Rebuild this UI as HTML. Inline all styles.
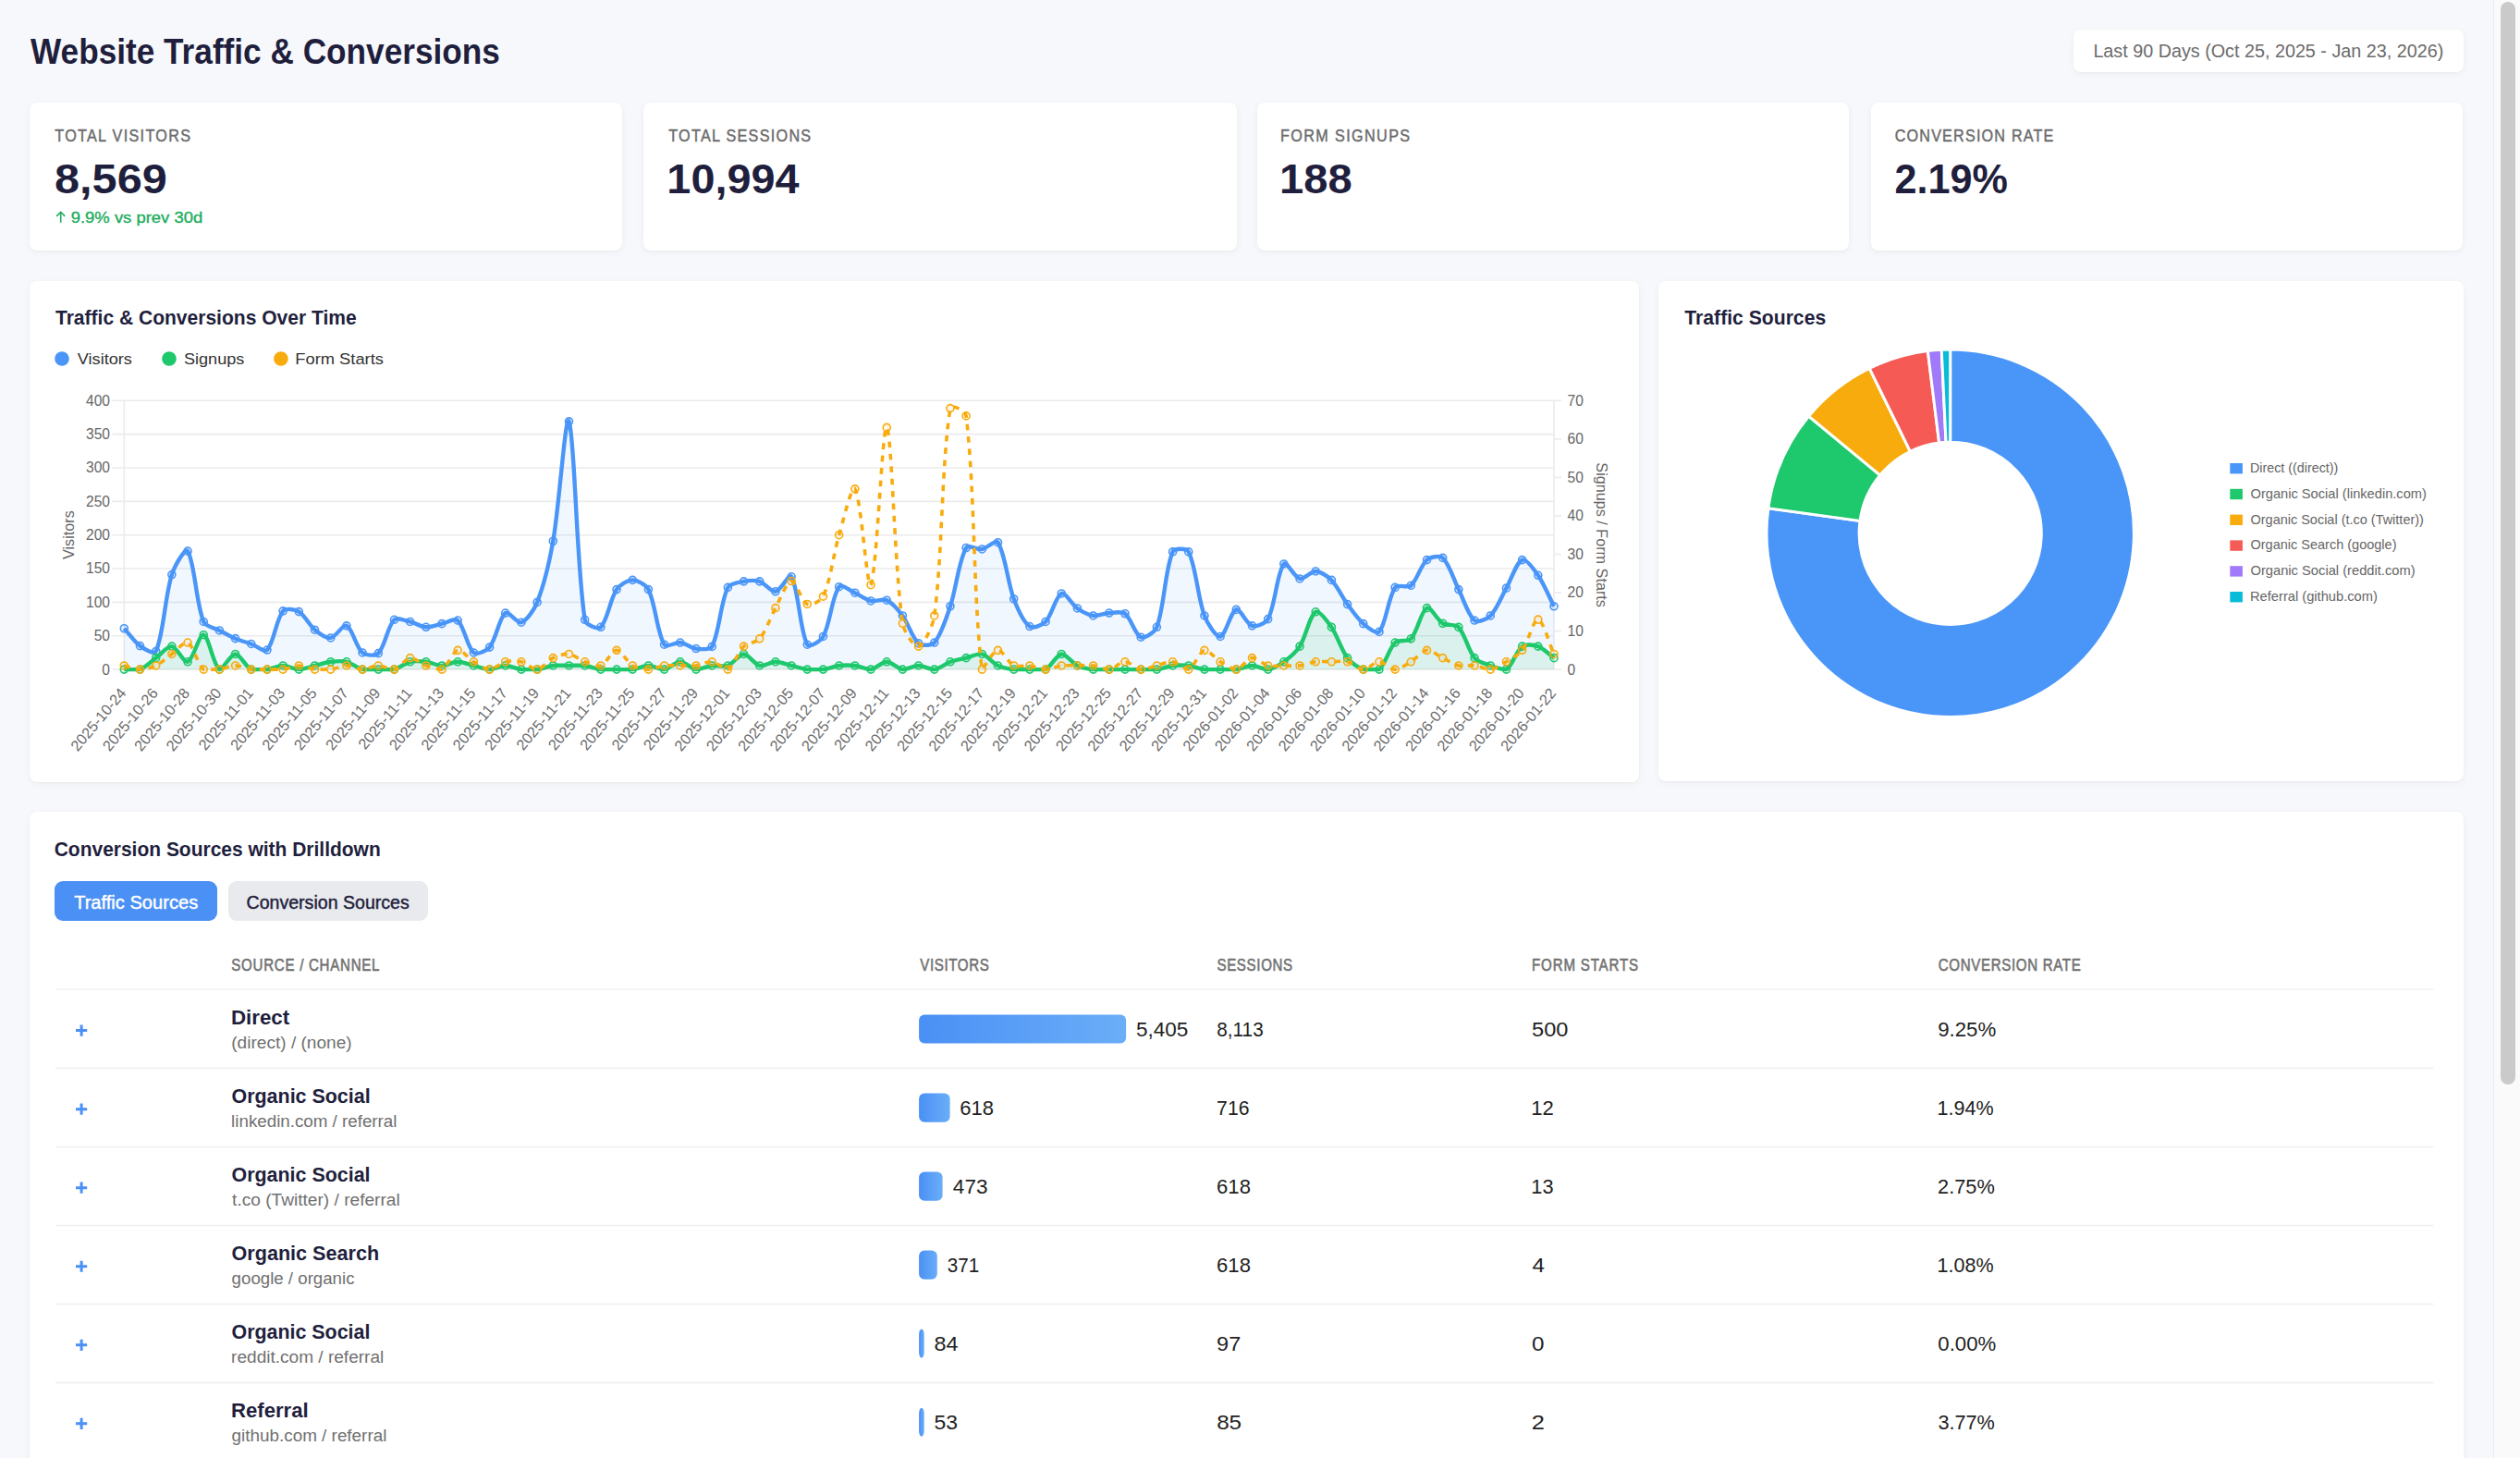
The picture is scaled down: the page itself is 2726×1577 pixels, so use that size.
<!DOCTYPE html>
<html><head><meta charset="utf-8"><title>Website Traffic &amp; Conversions</title>
<style>
html,body{margin:0;padding:0;}
body{width:2726px;height:1577px;overflow:hidden;background:#f7f8fb;position:relative;font-family:"Liberation Sans",sans-serif;}
.card{position:absolute;background:#fff;border-radius:8px;box-shadow:0 2px 8px rgba(0,0,0,0.045),0 1px 2px rgba(0,0,0,0.03);}
.btn{position:absolute;border-radius:9px;}
.sb{position:absolute;left:2697px;top:0;width:29px;height:1577px;background:#fafafa;border-left:1px solid #ececec;box-sizing:border-box;}
.thumb{position:absolute;left:2705px;top:2px;width:16px;height:1170.5px;background:#cacaca;border-radius:8px;}
</style>
<script>(function(){var w=window.innerWidth;if(w&&Math.abs(w-2726)>3){document.documentElement.style.zoom=(w/2726);}})();</script></head>
<body>
<div class="card" style="left:2243px;top:32px;width:421.5px;height:45.5px;border-radius:8px"></div>
<div class="card" style="left:32px;top:111px;width:640.6px;height:160px;border-radius:8px"></div>
<div class="card" style="left:695.8px;top:111px;width:641.8px;height:160px;border-radius:8px"></div>
<div class="card" style="left:1359.6px;top:111px;width:640.8px;height:160px;border-radius:8px"></div>
<div class="card" style="left:2023.6px;top:111px;width:640.8px;height:160px;border-radius:8px"></div>
<div class="card" style="left:32px;top:303.7px;width:1740.5px;height:542.3px;border-radius:8px"></div>
<div class="card" style="left:1794.4px;top:303.7px;width:870.6px;height:541.6px;border-radius:8px"></div>
<div class="card" style="left:32px;top:878.3px;width:2632.6px;height:800px;border-radius:8px"></div>
<div class="btn" style="left:59.2px;top:952.5px;width:175.5px;height:43.9px;background:#4a90f5"></div>
<div class="btn" style="left:246.7px;top:952.5px;width:216.8px;height:43.9px;background:#e9eaee"></div>
<div class="sb"></div><div class="thumb"></div>
<svg width="2726" height="1577" viewBox="0 0 2726 1577" style="position:absolute;left:0;top:0" font-family="Liberation Sans, sans-serif">
<defs><linearGradient id="barg" x1="0" x2="1" y1="0" y2="0"><stop offset="0" stop-color="#4a90f5"/><stop offset="1" stop-color="#6aaef8"/></linearGradient></defs>
<line x1="121.5" y1="724.10" x2="1681.00" y2="724.10" stroke="#ebebeb" stroke-width="1.6"/>
<text x="119" y="729.50" font-size="15.6" fill="#666" text-anchor="end">0</text>
<line x1="121.5" y1="687.75" x2="1681.00" y2="687.75" stroke="#ebebeb" stroke-width="1.6"/>
<text x="119" y="693.15" font-size="15.6" fill="#666" text-anchor="end">50</text>
<line x1="121.5" y1="651.40" x2="1681.00" y2="651.40" stroke="#ebebeb" stroke-width="1.6"/>
<text x="119" y="656.80" font-size="15.6" fill="#666" text-anchor="end">100</text>
<line x1="121.5" y1="615.05" x2="1681.00" y2="615.05" stroke="#ebebeb" stroke-width="1.6"/>
<text x="119" y="620.45" font-size="15.6" fill="#666" text-anchor="end">150</text>
<line x1="121.5" y1="578.70" x2="1681.00" y2="578.70" stroke="#ebebeb" stroke-width="1.6"/>
<text x="119" y="584.10" font-size="15.6" fill="#666" text-anchor="end">200</text>
<line x1="121.5" y1="542.35" x2="1681.00" y2="542.35" stroke="#ebebeb" stroke-width="1.6"/>
<text x="119" y="547.75" font-size="15.6" fill="#666" text-anchor="end">250</text>
<line x1="121.5" y1="506.00" x2="1681.00" y2="506.00" stroke="#ebebeb" stroke-width="1.6"/>
<text x="119" y="511.40" font-size="15.6" fill="#666" text-anchor="end">300</text>
<line x1="121.5" y1="469.65" x2="1681.00" y2="469.65" stroke="#ebebeb" stroke-width="1.6"/>
<text x="119" y="475.05" font-size="15.6" fill="#666" text-anchor="end">350</text>
<line x1="121.5" y1="433.30" x2="1681.00" y2="433.30" stroke="#ebebeb" stroke-width="1.6"/>
<text x="119" y="438.70" font-size="15.6" fill="#666" text-anchor="end">400</text>
<line x1="1681.00" y1="724.10" x2="1689" y2="724.10" stroke="#ebebeb" stroke-width="1.6"/>
<text x="1695.6" y="729.50" font-size="15.6" fill="#666">0</text>
<line x1="1681.00" y1="682.56" x2="1689" y2="682.56" stroke="#ebebeb" stroke-width="1.6"/>
<text x="1695.6" y="687.96" font-size="15.6" fill="#666">10</text>
<line x1="1681.00" y1="641.01" x2="1689" y2="641.01" stroke="#ebebeb" stroke-width="1.6"/>
<text x="1695.6" y="646.41" font-size="15.6" fill="#666">20</text>
<line x1="1681.00" y1="599.47" x2="1689" y2="599.47" stroke="#ebebeb" stroke-width="1.6"/>
<text x="1695.6" y="604.87" font-size="15.6" fill="#666">30</text>
<line x1="1681.00" y1="557.93" x2="1689" y2="557.93" stroke="#ebebeb" stroke-width="1.6"/>
<text x="1695.6" y="563.33" font-size="15.6" fill="#666">40</text>
<line x1="1681.00" y1="516.39" x2="1689" y2="516.39" stroke="#ebebeb" stroke-width="1.6"/>
<text x="1695.6" y="521.79" font-size="15.6" fill="#666">50</text>
<line x1="1681.00" y1="474.84" x2="1689" y2="474.84" stroke="#ebebeb" stroke-width="1.6"/>
<text x="1695.6" y="480.24" font-size="15.6" fill="#666">60</text>
<line x1="1681.00" y1="433.30" x2="1689" y2="433.30" stroke="#ebebeb" stroke-width="1.6"/>
<text x="1695.6" y="438.70" font-size="15.6" fill="#666">70</text>
<line x1="134.3" y1="433.3" x2="134.3" y2="724.1" stroke="#ebebeb" stroke-width="1.6"/>
<line x1="1681.0" y1="433.3" x2="1681.0" y2="724.1" stroke="#ebebeb" stroke-width="1.6"/>
<path d="M134.30,679.75 C139.46,685.42 145.46,694.32 151.49,698.65 C155.77,701.73 166.85,708.55 168.67,704.47 C177.16,685.43 178.29,645.44 185.86,621.59 C188.60,612.94 200.14,591.85 203.04,596.15 C210.45,607.11 211.98,651.91 220.23,672.48 C222.29,677.64 232.21,679.18 237.41,681.93 C242.52,684.64 249.29,688.41 254.60,690.66 C259.60,692.77 266.66,694.63 271.78,696.47 C276.97,698.34 286.00,706.09 288.97,703.02 C296.32,695.40 298.67,669.87 306.16,660.85 C308.98,657.44 319.24,659.15 323.34,661.58 C329.56,665.26 334.60,676.32 340.53,681.21 C344.91,684.82 352.85,690.55 357.71,689.93 C363.16,689.24 370.88,674.97 374.90,676.85 C381.19,679.77 385.25,700.00 392.08,705.93 C395.56,708.94 406.18,709.85 409.27,706.65 C416.49,699.17 419.25,677.47 426.45,670.30 C429.56,667.22 438.60,671.31 443.64,672.48 C448.91,673.71 455.59,677.97 460.83,678.30 C465.90,678.62 472.86,675.75 478.01,674.66 C483.17,673.57 491.99,668.11 495.20,671.03 C502.30,677.49 505.35,699.98 512.38,705.93 C515.66,708.70 526.40,704.07 529.57,700.11 C536.71,691.20 539.83,668.45 546.75,663.03 C550.14,660.38 559.62,674.67 563.94,673.21 C569.94,671.18 578.15,659.02 581.12,651.40 C588.46,632.63 594.77,605.41 598.31,585.24 C605.08,546.74 611.60,446.20 615.50,455.84 C621.91,471.72 623.20,608.97 632.68,670.30 C633.52,675.71 646.77,681.25 649.87,678.30 C657.08,671.43 659.95,648.10 667.05,637.59 C670.26,632.83 679.08,627.41 684.24,627.41 C689.39,627.41 698.91,632.49 701.42,637.59 C709.22,653.43 710.55,683.73 718.61,697.20 C720.86,700.96 730.79,694.39 735.79,695.02 C741.10,695.69 747.67,700.89 752.98,701.56 C757.98,702.20 768.03,703.50 770.17,699.38 C778.34,683.65 779.28,651.97 787.35,635.41 C789.59,630.81 799.21,629.88 804.54,628.86 C809.52,627.91 817.00,627.37 821.72,628.86 C827.31,630.64 834.12,640.48 838.91,639.77 C844.43,638.95 853.65,619.68 856.09,623.77 C863.96,636.91 865.07,681.74 873.28,697.20 C875.38,701.15 887.84,693.25 890.46,688.48 C898.15,674.49 899.87,645.37 907.65,634.68 C910.18,631.20 919.80,638.99 924.84,641.22 C930.11,643.57 936.57,648.68 942.02,649.95 C946.88,651.08 954.90,647.21 959.21,649.22 C965.21,652.01 972.16,660.21 976.39,665.94 C982.47,674.17 986.70,689.93 993.58,695.75 C997.01,698.65 1007.81,698.46 1010.76,695.02 C1018.12,686.46 1023.87,667.92 1027.95,655.76 C1034.18,637.17 1036.97,607.19 1045.13,592.51 C1047.28,588.65 1057.37,594.81 1062.32,593.97 C1067.68,593.06 1077.16,583.03 1079.51,586.70 C1087.47,599.17 1090.01,630.09 1096.69,647.76 C1100.32,657.35 1107.10,672.70 1113.88,677.57 C1117.41,680.11 1127.57,676.10 1131.06,672.48 C1137.88,665.41 1142.07,644.56 1148.25,641.95 C1152.38,640.20 1159.73,653.96 1165.43,657.94 C1170.04,661.16 1177.25,665.14 1182.62,665.94 C1187.56,666.67 1194.61,663.36 1199.80,663.03 C1204.93,662.71 1213.29,660.94 1216.99,663.76 C1223.60,668.79 1227.97,686.58 1234.18,689.20 C1238.29,690.94 1249.33,683.74 1251.36,678.30 C1259.65,656.04 1260.00,617.12 1268.55,596.88 C1270.31,592.69 1283.73,592.85 1285.73,596.88 C1294.04,613.56 1295.54,646.29 1302.92,665.94 C1305.85,673.77 1315.40,689.37 1320.10,688.48 C1325.71,687.41 1331.31,661.42 1337.29,659.40 C1341.62,657.93 1348.62,675.11 1354.47,676.85 C1358.93,678.17 1369.28,674.21 1371.66,669.58 C1379.59,654.15 1381.36,619.45 1388.85,609.96 C1391.68,606.37 1400.33,624.63 1406.03,625.96 C1410.64,627.03 1418.15,617.74 1423.22,617.96 C1428.46,618.18 1436.43,623.29 1440.40,627.41 C1446.74,633.98 1452.07,645.99 1457.59,653.58 C1462.38,660.17 1468.74,669.43 1474.77,674.66 C1479.05,678.37 1489.13,686.62 1491.96,683.39 C1499.44,674.84 1501.45,646.64 1509.14,635.41 C1511.76,631.59 1522.75,636.33 1526.33,633.23 C1533.06,627.39 1536.79,611.43 1543.52,605.60 C1547.10,602.49 1557.49,600.43 1560.70,603.42 C1567.80,610.02 1572.69,627.36 1577.89,637.59 C1583.00,647.64 1588.09,665.27 1595.07,671.03 C1598.40,673.77 1608.73,669.53 1612.26,665.94 C1619.04,659.06 1624.33,645.10 1629.44,636.13 C1634.65,627.00 1640.51,608.06 1646.63,605.60 C1650.82,603.92 1659.80,616.46 1663.81,622.32 C1670.11,631.51 1675.84,645.73 1681.00,655.76 L1681.0,724.1 L134.3,724.1 Z" fill="rgba(74,150,248,0.08)"/>
<path d="M134.30,724.10 C139.46,724.10 146.87,724.10 151.49,724.10 C157.18,722.03 163.52,715.38 168.67,711.64 C173.83,707.90 181.01,698.59 185.86,699.17 C191.32,699.83 198.77,717.34 203.04,715.79 C209.08,713.60 215.58,685.59 220.23,686.71 C225.89,688.08 230.89,720.16 237.41,724.10 C241.20,724.10 249.44,707.48 254.60,707.48 C259.75,707.48 265.79,721.20 271.78,724.10 C276.10,724.10 283.89,724.10 288.97,724.10 C294.20,723.47 301.00,719.95 306.16,719.95 C311.31,719.95 318.19,724.10 323.34,724.10 C328.50,724.10 335.37,721.19 340.53,719.95 C345.68,718.70 352.48,716.42 357.71,715.79 C362.79,715.18 370.01,714.61 374.90,715.79 C380.32,717.10 386.66,722.79 392.08,724.10 C396.97,724.10 404.11,724.10 409.27,724.10 C414.42,724.10 421.57,724.10 426.45,724.10 C431.88,722.79 438.21,717.10 443.64,715.79 C448.53,714.61 455.74,715.18 460.83,715.79 C466.05,716.42 472.86,719.95 478.01,719.95 C483.17,719.95 490.04,715.79 495.20,715.79 C500.35,715.79 507.23,718.70 512.38,719.95 C517.54,721.19 524.41,724.10 529.57,724.10 C534.72,724.10 541.60,719.95 546.75,719.95 C551.91,719.95 558.71,723.47 563.94,724.10 C569.02,724.10 576.04,724.10 581.12,724.10 C586.35,723.47 593.08,720.58 598.31,719.95 C603.39,719.33 610.34,719.95 615.50,719.95 C620.65,719.95 627.60,719.33 632.68,719.95 C637.91,720.58 644.64,723.47 649.87,724.10 C654.95,724.10 661.90,724.10 667.05,724.10 C672.21,724.10 679.16,724.10 684.24,724.10 C689.47,723.47 696.27,719.95 701.42,719.95 C706.58,719.95 713.65,724.10 718.61,724.10 C723.96,723.45 730.64,715.79 735.79,715.79 C740.95,715.79 747.63,723.45 752.98,724.10 C757.94,724.10 764.94,720.58 770.17,719.95 C775.25,719.33 782.74,721.62 787.35,719.95 C793.05,717.88 799.38,707.48 804.54,707.48 C809.69,707.48 816.10,718.59 821.72,719.95 C826.41,721.08 833.75,715.79 838.91,715.79 C844.06,715.79 850.94,718.70 856.09,719.95 C861.25,721.19 868.05,723.47 873.28,724.10 C878.36,724.10 885.38,724.10 890.46,724.10 C895.69,723.47 902.42,720.58 907.65,719.95 C912.73,719.33 919.75,719.33 924.84,719.95 C930.06,720.58 937.06,724.10 942.02,724.10 C947.37,723.45 954.05,715.79 959.21,715.79 C964.36,715.79 971.04,723.45 976.39,724.10 C981.35,724.10 988.42,719.95 993.58,719.95 C998.73,719.95 1005.81,724.10 1010.76,724.10 C1016.12,723.45 1022.60,717.73 1027.95,715.79 C1032.91,713.99 1039.98,712.88 1045.13,711.64 C1050.29,710.39 1057.63,706.35 1062.32,707.48 C1067.95,708.84 1073.88,717.23 1079.51,719.95 C1084.19,722.21 1091.46,723.47 1096.69,724.10 C1101.77,724.10 1108.72,724.10 1113.88,724.10 C1119.03,724.10 1126.75,724.10 1131.06,724.10 C1137.06,721.20 1142.79,708.14 1148.25,707.48 C1153.10,706.90 1159.81,717.23 1165.43,719.95 C1170.12,722.21 1177.39,723.47 1182.62,724.10 C1187.70,724.10 1194.65,724.10 1199.80,724.10 C1204.96,724.10 1211.83,724.10 1216.99,724.10 C1222.15,724.10 1229.02,724.10 1234.18,724.10 C1239.33,724.10 1246.28,724.10 1251.36,724.10 C1256.59,723.47 1263.32,720.58 1268.55,719.95 C1273.63,719.33 1280.65,719.33 1285.73,719.95 C1290.96,720.58 1297.69,723.47 1302.92,724.10 C1308.00,724.10 1314.95,724.10 1320.10,724.10 C1325.26,724.10 1332.21,724.10 1337.29,724.10 C1342.52,723.47 1349.32,719.95 1354.47,719.95 C1359.63,719.95 1366.70,724.10 1371.66,724.10 C1377.01,723.45 1384.27,719.11 1388.85,715.79 C1394.58,711.63 1402.24,705.13 1406.03,699.17 C1412.55,688.93 1416.69,665.73 1423.22,661.79 C1427.01,659.50 1436.38,672.57 1440.40,678.40 C1446.69,687.53 1451.01,702.89 1457.59,711.64 C1461.32,716.60 1469.08,722.03 1474.77,724.10 C1479.39,724.10 1488.48,724.10 1491.96,724.10 C1498.79,718.32 1502.38,701.56 1509.14,695.02 C1512.69,691.59 1523.02,694.47 1526.33,690.87 C1533.33,683.25 1537.22,660.67 1543.52,657.63 C1547.54,655.69 1554.77,670.67 1560.70,674.25 C1565.09,676.90 1574.58,674.80 1577.89,678.40 C1584.89,686.02 1588.24,703.38 1595.07,711.64 C1598.56,715.85 1606.90,718.00 1612.26,719.95 C1617.22,721.74 1625.64,724.10 1629.44,724.10 C1635.95,720.17 1640.05,703.94 1646.63,699.17 C1650.36,696.47 1659.20,697.50 1663.81,699.17 C1669.51,701.24 1675.84,707.90 1681.00,711.64 L1681.0,724.1 L134.3,724.1 Z" fill="rgba(34,197,94,0.1)"/>
<path d="M134.30,679.75 C139.46,685.42 145.46,694.32 151.49,698.65 C155.77,701.73 166.85,708.55 168.67,704.47 C177.16,685.43 178.29,645.44 185.86,621.59 C188.60,612.94 200.14,591.85 203.04,596.15 C210.45,607.11 211.98,651.91 220.23,672.48 C222.29,677.64 232.21,679.18 237.41,681.93 C242.52,684.64 249.29,688.41 254.60,690.66 C259.60,692.77 266.66,694.63 271.78,696.47 C276.97,698.34 286.00,706.09 288.97,703.02 C296.32,695.40 298.67,669.87 306.16,660.85 C308.98,657.44 319.24,659.15 323.34,661.58 C329.56,665.26 334.60,676.32 340.53,681.21 C344.91,684.82 352.85,690.55 357.71,689.93 C363.16,689.24 370.88,674.97 374.90,676.85 C381.19,679.77 385.25,700.00 392.08,705.93 C395.56,708.94 406.18,709.85 409.27,706.65 C416.49,699.17 419.25,677.47 426.45,670.30 C429.56,667.22 438.60,671.31 443.64,672.48 C448.91,673.71 455.59,677.97 460.83,678.30 C465.90,678.62 472.86,675.75 478.01,674.66 C483.17,673.57 491.99,668.11 495.20,671.03 C502.30,677.49 505.35,699.98 512.38,705.93 C515.66,708.70 526.40,704.07 529.57,700.11 C536.71,691.20 539.83,668.45 546.75,663.03 C550.14,660.38 559.62,674.67 563.94,673.21 C569.94,671.18 578.15,659.02 581.12,651.40 C588.46,632.63 594.77,605.41 598.31,585.24 C605.08,546.74 611.60,446.20 615.50,455.84 C621.91,471.72 623.20,608.97 632.68,670.30 C633.52,675.71 646.77,681.25 649.87,678.30 C657.08,671.43 659.95,648.10 667.05,637.59 C670.26,632.83 679.08,627.41 684.24,627.41 C689.39,627.41 698.91,632.49 701.42,637.59 C709.22,653.43 710.55,683.73 718.61,697.20 C720.86,700.96 730.79,694.39 735.79,695.02 C741.10,695.69 747.67,700.89 752.98,701.56 C757.98,702.20 768.03,703.50 770.17,699.38 C778.34,683.65 779.28,651.97 787.35,635.41 C789.59,630.81 799.21,629.88 804.54,628.86 C809.52,627.91 817.00,627.37 821.72,628.86 C827.31,630.64 834.12,640.48 838.91,639.77 C844.43,638.95 853.65,619.68 856.09,623.77 C863.96,636.91 865.07,681.74 873.28,697.20 C875.38,701.15 887.84,693.25 890.46,688.48 C898.15,674.49 899.87,645.37 907.65,634.68 C910.18,631.20 919.80,638.99 924.84,641.22 C930.11,643.57 936.57,648.68 942.02,649.95 C946.88,651.08 954.90,647.21 959.21,649.22 C965.21,652.01 972.16,660.21 976.39,665.94 C982.47,674.17 986.70,689.93 993.58,695.75 C997.01,698.65 1007.81,698.46 1010.76,695.02 C1018.12,686.46 1023.87,667.92 1027.95,655.76 C1034.18,637.17 1036.97,607.19 1045.13,592.51 C1047.28,588.65 1057.37,594.81 1062.32,593.97 C1067.68,593.06 1077.16,583.03 1079.51,586.70 C1087.47,599.17 1090.01,630.09 1096.69,647.76 C1100.32,657.35 1107.10,672.70 1113.88,677.57 C1117.41,680.11 1127.57,676.10 1131.06,672.48 C1137.88,665.41 1142.07,644.56 1148.25,641.95 C1152.38,640.20 1159.73,653.96 1165.43,657.94 C1170.04,661.16 1177.25,665.14 1182.62,665.94 C1187.56,666.67 1194.61,663.36 1199.80,663.03 C1204.93,662.71 1213.29,660.94 1216.99,663.76 C1223.60,668.79 1227.97,686.58 1234.18,689.20 C1238.29,690.94 1249.33,683.74 1251.36,678.30 C1259.65,656.04 1260.00,617.12 1268.55,596.88 C1270.31,592.69 1283.73,592.85 1285.73,596.88 C1294.04,613.56 1295.54,646.29 1302.92,665.94 C1305.85,673.77 1315.40,689.37 1320.10,688.48 C1325.71,687.41 1331.31,661.42 1337.29,659.40 C1341.62,657.93 1348.62,675.11 1354.47,676.85 C1358.93,678.17 1369.28,674.21 1371.66,669.58 C1379.59,654.15 1381.36,619.45 1388.85,609.96 C1391.68,606.37 1400.33,624.63 1406.03,625.96 C1410.64,627.03 1418.15,617.74 1423.22,617.96 C1428.46,618.18 1436.43,623.29 1440.40,627.41 C1446.74,633.98 1452.07,645.99 1457.59,653.58 C1462.38,660.17 1468.74,669.43 1474.77,674.66 C1479.05,678.37 1489.13,686.62 1491.96,683.39 C1499.44,674.84 1501.45,646.64 1509.14,635.41 C1511.76,631.59 1522.75,636.33 1526.33,633.23 C1533.06,627.39 1536.79,611.43 1543.52,605.60 C1547.10,602.49 1557.49,600.43 1560.70,603.42 C1567.80,610.02 1572.69,627.36 1577.89,637.59 C1583.00,647.64 1588.09,665.27 1595.07,671.03 C1598.40,673.77 1608.73,669.53 1612.26,665.94 C1619.04,659.06 1624.33,645.10 1629.44,636.13 C1634.65,627.00 1640.51,608.06 1646.63,605.60 C1650.82,603.92 1659.80,616.46 1663.81,622.32 C1670.11,631.51 1675.84,645.73 1681.00,655.76" fill="none" stroke="#4a96f8" stroke-width="4.4" stroke-linejoin="round"/>
<circle cx="134.30" cy="679.75" r="4" fill="rgba(59,130,246,0.1)" stroke="#4a96f8" stroke-width="1.6"/>
<circle cx="151.49" cy="698.65" r="4" fill="rgba(59,130,246,0.1)" stroke="#4a96f8" stroke-width="1.6"/>
<circle cx="168.67" cy="704.47" r="4" fill="rgba(59,130,246,0.1)" stroke="#4a96f8" stroke-width="1.6"/>
<circle cx="185.86" cy="621.59" r="4" fill="rgba(59,130,246,0.1)" stroke="#4a96f8" stroke-width="1.6"/>
<circle cx="203.04" cy="596.15" r="4" fill="rgba(59,130,246,0.1)" stroke="#4a96f8" stroke-width="1.6"/>
<circle cx="220.23" cy="672.48" r="4" fill="rgba(59,130,246,0.1)" stroke="#4a96f8" stroke-width="1.6"/>
<circle cx="237.41" cy="681.93" r="4" fill="rgba(59,130,246,0.1)" stroke="#4a96f8" stroke-width="1.6"/>
<circle cx="254.60" cy="690.66" r="4" fill="rgba(59,130,246,0.1)" stroke="#4a96f8" stroke-width="1.6"/>
<circle cx="271.78" cy="696.47" r="4" fill="rgba(59,130,246,0.1)" stroke="#4a96f8" stroke-width="1.6"/>
<circle cx="288.97" cy="703.02" r="4" fill="rgba(59,130,246,0.1)" stroke="#4a96f8" stroke-width="1.6"/>
<circle cx="306.16" cy="660.85" r="4" fill="rgba(59,130,246,0.1)" stroke="#4a96f8" stroke-width="1.6"/>
<circle cx="323.34" cy="661.58" r="4" fill="rgba(59,130,246,0.1)" stroke="#4a96f8" stroke-width="1.6"/>
<circle cx="340.53" cy="681.21" r="4" fill="rgba(59,130,246,0.1)" stroke="#4a96f8" stroke-width="1.6"/>
<circle cx="357.71" cy="689.93" r="4" fill="rgba(59,130,246,0.1)" stroke="#4a96f8" stroke-width="1.6"/>
<circle cx="374.90" cy="676.85" r="4" fill="rgba(59,130,246,0.1)" stroke="#4a96f8" stroke-width="1.6"/>
<circle cx="392.08" cy="705.93" r="4" fill="rgba(59,130,246,0.1)" stroke="#4a96f8" stroke-width="1.6"/>
<circle cx="409.27" cy="706.65" r="4" fill="rgba(59,130,246,0.1)" stroke="#4a96f8" stroke-width="1.6"/>
<circle cx="426.45" cy="670.30" r="4" fill="rgba(59,130,246,0.1)" stroke="#4a96f8" stroke-width="1.6"/>
<circle cx="443.64" cy="672.48" r="4" fill="rgba(59,130,246,0.1)" stroke="#4a96f8" stroke-width="1.6"/>
<circle cx="460.83" cy="678.30" r="4" fill="rgba(59,130,246,0.1)" stroke="#4a96f8" stroke-width="1.6"/>
<circle cx="478.01" cy="674.66" r="4" fill="rgba(59,130,246,0.1)" stroke="#4a96f8" stroke-width="1.6"/>
<circle cx="495.20" cy="671.03" r="4" fill="rgba(59,130,246,0.1)" stroke="#4a96f8" stroke-width="1.6"/>
<circle cx="512.38" cy="705.93" r="4" fill="rgba(59,130,246,0.1)" stroke="#4a96f8" stroke-width="1.6"/>
<circle cx="529.57" cy="700.11" r="4" fill="rgba(59,130,246,0.1)" stroke="#4a96f8" stroke-width="1.6"/>
<circle cx="546.75" cy="663.03" r="4" fill="rgba(59,130,246,0.1)" stroke="#4a96f8" stroke-width="1.6"/>
<circle cx="563.94" cy="673.21" r="4" fill="rgba(59,130,246,0.1)" stroke="#4a96f8" stroke-width="1.6"/>
<circle cx="581.12" cy="651.40" r="4" fill="rgba(59,130,246,0.1)" stroke="#4a96f8" stroke-width="1.6"/>
<circle cx="598.31" cy="585.24" r="4" fill="rgba(59,130,246,0.1)" stroke="#4a96f8" stroke-width="1.6"/>
<circle cx="615.50" cy="455.84" r="4" fill="rgba(59,130,246,0.1)" stroke="#4a96f8" stroke-width="1.6"/>
<circle cx="632.68" cy="670.30" r="4" fill="rgba(59,130,246,0.1)" stroke="#4a96f8" stroke-width="1.6"/>
<circle cx="649.87" cy="678.30" r="4" fill="rgba(59,130,246,0.1)" stroke="#4a96f8" stroke-width="1.6"/>
<circle cx="667.05" cy="637.59" r="4" fill="rgba(59,130,246,0.1)" stroke="#4a96f8" stroke-width="1.6"/>
<circle cx="684.24" cy="627.41" r="4" fill="rgba(59,130,246,0.1)" stroke="#4a96f8" stroke-width="1.6"/>
<circle cx="701.42" cy="637.59" r="4" fill="rgba(59,130,246,0.1)" stroke="#4a96f8" stroke-width="1.6"/>
<circle cx="718.61" cy="697.20" r="4" fill="rgba(59,130,246,0.1)" stroke="#4a96f8" stroke-width="1.6"/>
<circle cx="735.79" cy="695.02" r="4" fill="rgba(59,130,246,0.1)" stroke="#4a96f8" stroke-width="1.6"/>
<circle cx="752.98" cy="701.56" r="4" fill="rgba(59,130,246,0.1)" stroke="#4a96f8" stroke-width="1.6"/>
<circle cx="770.17" cy="699.38" r="4" fill="rgba(59,130,246,0.1)" stroke="#4a96f8" stroke-width="1.6"/>
<circle cx="787.35" cy="635.41" r="4" fill="rgba(59,130,246,0.1)" stroke="#4a96f8" stroke-width="1.6"/>
<circle cx="804.54" cy="628.86" r="4" fill="rgba(59,130,246,0.1)" stroke="#4a96f8" stroke-width="1.6"/>
<circle cx="821.72" cy="628.86" r="4" fill="rgba(59,130,246,0.1)" stroke="#4a96f8" stroke-width="1.6"/>
<circle cx="838.91" cy="639.77" r="4" fill="rgba(59,130,246,0.1)" stroke="#4a96f8" stroke-width="1.6"/>
<circle cx="856.09" cy="623.77" r="4" fill="rgba(59,130,246,0.1)" stroke="#4a96f8" stroke-width="1.6"/>
<circle cx="873.28" cy="697.20" r="4" fill="rgba(59,130,246,0.1)" stroke="#4a96f8" stroke-width="1.6"/>
<circle cx="890.46" cy="688.48" r="4" fill="rgba(59,130,246,0.1)" stroke="#4a96f8" stroke-width="1.6"/>
<circle cx="907.65" cy="634.68" r="4" fill="rgba(59,130,246,0.1)" stroke="#4a96f8" stroke-width="1.6"/>
<circle cx="924.84" cy="641.22" r="4" fill="rgba(59,130,246,0.1)" stroke="#4a96f8" stroke-width="1.6"/>
<circle cx="942.02" cy="649.95" r="4" fill="rgba(59,130,246,0.1)" stroke="#4a96f8" stroke-width="1.6"/>
<circle cx="959.21" cy="649.22" r="4" fill="rgba(59,130,246,0.1)" stroke="#4a96f8" stroke-width="1.6"/>
<circle cx="976.39" cy="665.94" r="4" fill="rgba(59,130,246,0.1)" stroke="#4a96f8" stroke-width="1.6"/>
<circle cx="993.58" cy="695.75" r="4" fill="rgba(59,130,246,0.1)" stroke="#4a96f8" stroke-width="1.6"/>
<circle cx="1010.76" cy="695.02" r="4" fill="rgba(59,130,246,0.1)" stroke="#4a96f8" stroke-width="1.6"/>
<circle cx="1027.95" cy="655.76" r="4" fill="rgba(59,130,246,0.1)" stroke="#4a96f8" stroke-width="1.6"/>
<circle cx="1045.13" cy="592.51" r="4" fill="rgba(59,130,246,0.1)" stroke="#4a96f8" stroke-width="1.6"/>
<circle cx="1062.32" cy="593.97" r="4" fill="rgba(59,130,246,0.1)" stroke="#4a96f8" stroke-width="1.6"/>
<circle cx="1079.51" cy="586.70" r="4" fill="rgba(59,130,246,0.1)" stroke="#4a96f8" stroke-width="1.6"/>
<circle cx="1096.69" cy="647.76" r="4" fill="rgba(59,130,246,0.1)" stroke="#4a96f8" stroke-width="1.6"/>
<circle cx="1113.88" cy="677.57" r="4" fill="rgba(59,130,246,0.1)" stroke="#4a96f8" stroke-width="1.6"/>
<circle cx="1131.06" cy="672.48" r="4" fill="rgba(59,130,246,0.1)" stroke="#4a96f8" stroke-width="1.6"/>
<circle cx="1148.25" cy="641.95" r="4" fill="rgba(59,130,246,0.1)" stroke="#4a96f8" stroke-width="1.6"/>
<circle cx="1165.43" cy="657.94" r="4" fill="rgba(59,130,246,0.1)" stroke="#4a96f8" stroke-width="1.6"/>
<circle cx="1182.62" cy="665.94" r="4" fill="rgba(59,130,246,0.1)" stroke="#4a96f8" stroke-width="1.6"/>
<circle cx="1199.80" cy="663.03" r="4" fill="rgba(59,130,246,0.1)" stroke="#4a96f8" stroke-width="1.6"/>
<circle cx="1216.99" cy="663.76" r="4" fill="rgba(59,130,246,0.1)" stroke="#4a96f8" stroke-width="1.6"/>
<circle cx="1234.18" cy="689.20" r="4" fill="rgba(59,130,246,0.1)" stroke="#4a96f8" stroke-width="1.6"/>
<circle cx="1251.36" cy="678.30" r="4" fill="rgba(59,130,246,0.1)" stroke="#4a96f8" stroke-width="1.6"/>
<circle cx="1268.55" cy="596.88" r="4" fill="rgba(59,130,246,0.1)" stroke="#4a96f8" stroke-width="1.6"/>
<circle cx="1285.73" cy="596.88" r="4" fill="rgba(59,130,246,0.1)" stroke="#4a96f8" stroke-width="1.6"/>
<circle cx="1302.92" cy="665.94" r="4" fill="rgba(59,130,246,0.1)" stroke="#4a96f8" stroke-width="1.6"/>
<circle cx="1320.10" cy="688.48" r="4" fill="rgba(59,130,246,0.1)" stroke="#4a96f8" stroke-width="1.6"/>
<circle cx="1337.29" cy="659.40" r="4" fill="rgba(59,130,246,0.1)" stroke="#4a96f8" stroke-width="1.6"/>
<circle cx="1354.47" cy="676.85" r="4" fill="rgba(59,130,246,0.1)" stroke="#4a96f8" stroke-width="1.6"/>
<circle cx="1371.66" cy="669.58" r="4" fill="rgba(59,130,246,0.1)" stroke="#4a96f8" stroke-width="1.6"/>
<circle cx="1388.85" cy="609.96" r="4" fill="rgba(59,130,246,0.1)" stroke="#4a96f8" stroke-width="1.6"/>
<circle cx="1406.03" cy="625.96" r="4" fill="rgba(59,130,246,0.1)" stroke="#4a96f8" stroke-width="1.6"/>
<circle cx="1423.22" cy="617.96" r="4" fill="rgba(59,130,246,0.1)" stroke="#4a96f8" stroke-width="1.6"/>
<circle cx="1440.40" cy="627.41" r="4" fill="rgba(59,130,246,0.1)" stroke="#4a96f8" stroke-width="1.6"/>
<circle cx="1457.59" cy="653.58" r="4" fill="rgba(59,130,246,0.1)" stroke="#4a96f8" stroke-width="1.6"/>
<circle cx="1474.77" cy="674.66" r="4" fill="rgba(59,130,246,0.1)" stroke="#4a96f8" stroke-width="1.6"/>
<circle cx="1491.96" cy="683.39" r="4" fill="rgba(59,130,246,0.1)" stroke="#4a96f8" stroke-width="1.6"/>
<circle cx="1509.14" cy="635.41" r="4" fill="rgba(59,130,246,0.1)" stroke="#4a96f8" stroke-width="1.6"/>
<circle cx="1526.33" cy="633.23" r="4" fill="rgba(59,130,246,0.1)" stroke="#4a96f8" stroke-width="1.6"/>
<circle cx="1543.52" cy="605.60" r="4" fill="rgba(59,130,246,0.1)" stroke="#4a96f8" stroke-width="1.6"/>
<circle cx="1560.70" cy="603.42" r="4" fill="rgba(59,130,246,0.1)" stroke="#4a96f8" stroke-width="1.6"/>
<circle cx="1577.89" cy="637.59" r="4" fill="rgba(59,130,246,0.1)" stroke="#4a96f8" stroke-width="1.6"/>
<circle cx="1595.07" cy="671.03" r="4" fill="rgba(59,130,246,0.1)" stroke="#4a96f8" stroke-width="1.6"/>
<circle cx="1612.26" cy="665.94" r="4" fill="rgba(59,130,246,0.1)" stroke="#4a96f8" stroke-width="1.6"/>
<circle cx="1629.44" cy="636.13" r="4" fill="rgba(59,130,246,0.1)" stroke="#4a96f8" stroke-width="1.6"/>
<circle cx="1646.63" cy="605.60" r="4" fill="rgba(59,130,246,0.1)" stroke="#4a96f8" stroke-width="1.6"/>
<circle cx="1663.81" cy="622.32" r="4" fill="rgba(59,130,246,0.1)" stroke="#4a96f8" stroke-width="1.6"/>
<circle cx="1681.00" cy="655.76" r="4" fill="rgba(59,130,246,0.1)" stroke="#4a96f8" stroke-width="1.6"/>
<path d="M134.30,724.10 C139.46,724.10 146.87,724.10 151.49,724.10 C157.18,722.03 163.52,715.38 168.67,711.64 C173.83,707.90 181.01,698.59 185.86,699.17 C191.32,699.83 198.77,717.34 203.04,715.79 C209.08,713.60 215.58,685.59 220.23,686.71 C225.89,688.08 230.89,720.16 237.41,724.10 C241.20,724.10 249.44,707.48 254.60,707.48 C259.75,707.48 265.79,721.20 271.78,724.10 C276.10,724.10 283.89,724.10 288.97,724.10 C294.20,723.47 301.00,719.95 306.16,719.95 C311.31,719.95 318.19,724.10 323.34,724.10 C328.50,724.10 335.37,721.19 340.53,719.95 C345.68,718.70 352.48,716.42 357.71,715.79 C362.79,715.18 370.01,714.61 374.90,715.79 C380.32,717.10 386.66,722.79 392.08,724.10 C396.97,724.10 404.11,724.10 409.27,724.10 C414.42,724.10 421.57,724.10 426.45,724.10 C431.88,722.79 438.21,717.10 443.64,715.79 C448.53,714.61 455.74,715.18 460.83,715.79 C466.05,716.42 472.86,719.95 478.01,719.95 C483.17,719.95 490.04,715.79 495.20,715.79 C500.35,715.79 507.23,718.70 512.38,719.95 C517.54,721.19 524.41,724.10 529.57,724.10 C534.72,724.10 541.60,719.95 546.75,719.95 C551.91,719.95 558.71,723.47 563.94,724.10 C569.02,724.10 576.04,724.10 581.12,724.10 C586.35,723.47 593.08,720.58 598.31,719.95 C603.39,719.33 610.34,719.95 615.50,719.95 C620.65,719.95 627.60,719.33 632.68,719.95 C637.91,720.58 644.64,723.47 649.87,724.10 C654.95,724.10 661.90,724.10 667.05,724.10 C672.21,724.10 679.16,724.10 684.24,724.10 C689.47,723.47 696.27,719.95 701.42,719.95 C706.58,719.95 713.65,724.10 718.61,724.10 C723.96,723.45 730.64,715.79 735.79,715.79 C740.95,715.79 747.63,723.45 752.98,724.10 C757.94,724.10 764.94,720.58 770.17,719.95 C775.25,719.33 782.74,721.62 787.35,719.95 C793.05,717.88 799.38,707.48 804.54,707.48 C809.69,707.48 816.10,718.59 821.72,719.95 C826.41,721.08 833.75,715.79 838.91,715.79 C844.06,715.79 850.94,718.70 856.09,719.95 C861.25,721.19 868.05,723.47 873.28,724.10 C878.36,724.10 885.38,724.10 890.46,724.10 C895.69,723.47 902.42,720.58 907.65,719.95 C912.73,719.33 919.75,719.33 924.84,719.95 C930.06,720.58 937.06,724.10 942.02,724.10 C947.37,723.45 954.05,715.79 959.21,715.79 C964.36,715.79 971.04,723.45 976.39,724.10 C981.35,724.10 988.42,719.95 993.58,719.95 C998.73,719.95 1005.81,724.10 1010.76,724.10 C1016.12,723.45 1022.60,717.73 1027.95,715.79 C1032.91,713.99 1039.98,712.88 1045.13,711.64 C1050.29,710.39 1057.63,706.35 1062.32,707.48 C1067.95,708.84 1073.88,717.23 1079.51,719.95 C1084.19,722.21 1091.46,723.47 1096.69,724.10 C1101.77,724.10 1108.72,724.10 1113.88,724.10 C1119.03,724.10 1126.75,724.10 1131.06,724.10 C1137.06,721.20 1142.79,708.14 1148.25,707.48 C1153.10,706.90 1159.81,717.23 1165.43,719.95 C1170.12,722.21 1177.39,723.47 1182.62,724.10 C1187.70,724.10 1194.65,724.10 1199.80,724.10 C1204.96,724.10 1211.83,724.10 1216.99,724.10 C1222.15,724.10 1229.02,724.10 1234.18,724.10 C1239.33,724.10 1246.28,724.10 1251.36,724.10 C1256.59,723.47 1263.32,720.58 1268.55,719.95 C1273.63,719.33 1280.65,719.33 1285.73,719.95 C1290.96,720.58 1297.69,723.47 1302.92,724.10 C1308.00,724.10 1314.95,724.10 1320.10,724.10 C1325.26,724.10 1332.21,724.10 1337.29,724.10 C1342.52,723.47 1349.32,719.95 1354.47,719.95 C1359.63,719.95 1366.70,724.10 1371.66,724.10 C1377.01,723.45 1384.27,719.11 1388.85,715.79 C1394.58,711.63 1402.24,705.13 1406.03,699.17 C1412.55,688.93 1416.69,665.73 1423.22,661.79 C1427.01,659.50 1436.38,672.57 1440.40,678.40 C1446.69,687.53 1451.01,702.89 1457.59,711.64 C1461.32,716.60 1469.08,722.03 1474.77,724.10 C1479.39,724.10 1488.48,724.10 1491.96,724.10 C1498.79,718.32 1502.38,701.56 1509.14,695.02 C1512.69,691.59 1523.02,694.47 1526.33,690.87 C1533.33,683.25 1537.22,660.67 1543.52,657.63 C1547.54,655.69 1554.77,670.67 1560.70,674.25 C1565.09,676.90 1574.58,674.80 1577.89,678.40 C1584.89,686.02 1588.24,703.38 1595.07,711.64 C1598.56,715.85 1606.90,718.00 1612.26,719.95 C1617.22,721.74 1625.64,724.10 1629.44,724.10 C1635.95,720.17 1640.05,703.94 1646.63,699.17 C1650.36,696.47 1659.20,697.50 1663.81,699.17 C1669.51,701.24 1675.84,707.90 1681.00,711.64" fill="none" stroke="#1ec86c" stroke-width="4.4" stroke-linejoin="round"/>
<circle cx="134.30" cy="724.10" r="4" fill="rgba(34,197,94,0.1)" stroke="#1ec86c" stroke-width="1.6"/>
<circle cx="151.49" cy="724.10" r="4" fill="rgba(34,197,94,0.1)" stroke="#1ec86c" stroke-width="1.6"/>
<circle cx="168.67" cy="711.64" r="4" fill="rgba(34,197,94,0.1)" stroke="#1ec86c" stroke-width="1.6"/>
<circle cx="185.86" cy="699.17" r="4" fill="rgba(34,197,94,0.1)" stroke="#1ec86c" stroke-width="1.6"/>
<circle cx="203.04" cy="715.79" r="4" fill="rgba(34,197,94,0.1)" stroke="#1ec86c" stroke-width="1.6"/>
<circle cx="220.23" cy="686.71" r="4" fill="rgba(34,197,94,0.1)" stroke="#1ec86c" stroke-width="1.6"/>
<circle cx="237.41" cy="724.10" r="4" fill="rgba(34,197,94,0.1)" stroke="#1ec86c" stroke-width="1.6"/>
<circle cx="254.60" cy="707.48" r="4" fill="rgba(34,197,94,0.1)" stroke="#1ec86c" stroke-width="1.6"/>
<circle cx="271.78" cy="724.10" r="4" fill="rgba(34,197,94,0.1)" stroke="#1ec86c" stroke-width="1.6"/>
<circle cx="288.97" cy="724.10" r="4" fill="rgba(34,197,94,0.1)" stroke="#1ec86c" stroke-width="1.6"/>
<circle cx="306.16" cy="719.95" r="4" fill="rgba(34,197,94,0.1)" stroke="#1ec86c" stroke-width="1.6"/>
<circle cx="323.34" cy="724.10" r="4" fill="rgba(34,197,94,0.1)" stroke="#1ec86c" stroke-width="1.6"/>
<circle cx="340.53" cy="719.95" r="4" fill="rgba(34,197,94,0.1)" stroke="#1ec86c" stroke-width="1.6"/>
<circle cx="357.71" cy="715.79" r="4" fill="rgba(34,197,94,0.1)" stroke="#1ec86c" stroke-width="1.6"/>
<circle cx="374.90" cy="715.79" r="4" fill="rgba(34,197,94,0.1)" stroke="#1ec86c" stroke-width="1.6"/>
<circle cx="392.08" cy="724.10" r="4" fill="rgba(34,197,94,0.1)" stroke="#1ec86c" stroke-width="1.6"/>
<circle cx="409.27" cy="724.10" r="4" fill="rgba(34,197,94,0.1)" stroke="#1ec86c" stroke-width="1.6"/>
<circle cx="426.45" cy="724.10" r="4" fill="rgba(34,197,94,0.1)" stroke="#1ec86c" stroke-width="1.6"/>
<circle cx="443.64" cy="715.79" r="4" fill="rgba(34,197,94,0.1)" stroke="#1ec86c" stroke-width="1.6"/>
<circle cx="460.83" cy="715.79" r="4" fill="rgba(34,197,94,0.1)" stroke="#1ec86c" stroke-width="1.6"/>
<circle cx="478.01" cy="719.95" r="4" fill="rgba(34,197,94,0.1)" stroke="#1ec86c" stroke-width="1.6"/>
<circle cx="495.20" cy="715.79" r="4" fill="rgba(34,197,94,0.1)" stroke="#1ec86c" stroke-width="1.6"/>
<circle cx="512.38" cy="719.95" r="4" fill="rgba(34,197,94,0.1)" stroke="#1ec86c" stroke-width="1.6"/>
<circle cx="529.57" cy="724.10" r="4" fill="rgba(34,197,94,0.1)" stroke="#1ec86c" stroke-width="1.6"/>
<circle cx="546.75" cy="719.95" r="4" fill="rgba(34,197,94,0.1)" stroke="#1ec86c" stroke-width="1.6"/>
<circle cx="563.94" cy="724.10" r="4" fill="rgba(34,197,94,0.1)" stroke="#1ec86c" stroke-width="1.6"/>
<circle cx="581.12" cy="724.10" r="4" fill="rgba(34,197,94,0.1)" stroke="#1ec86c" stroke-width="1.6"/>
<circle cx="598.31" cy="719.95" r="4" fill="rgba(34,197,94,0.1)" stroke="#1ec86c" stroke-width="1.6"/>
<circle cx="615.50" cy="719.95" r="4" fill="rgba(34,197,94,0.1)" stroke="#1ec86c" stroke-width="1.6"/>
<circle cx="632.68" cy="719.95" r="4" fill="rgba(34,197,94,0.1)" stroke="#1ec86c" stroke-width="1.6"/>
<circle cx="649.87" cy="724.10" r="4" fill="rgba(34,197,94,0.1)" stroke="#1ec86c" stroke-width="1.6"/>
<circle cx="667.05" cy="724.10" r="4" fill="rgba(34,197,94,0.1)" stroke="#1ec86c" stroke-width="1.6"/>
<circle cx="684.24" cy="724.10" r="4" fill="rgba(34,197,94,0.1)" stroke="#1ec86c" stroke-width="1.6"/>
<circle cx="701.42" cy="719.95" r="4" fill="rgba(34,197,94,0.1)" stroke="#1ec86c" stroke-width="1.6"/>
<circle cx="718.61" cy="724.10" r="4" fill="rgba(34,197,94,0.1)" stroke="#1ec86c" stroke-width="1.6"/>
<circle cx="735.79" cy="715.79" r="4" fill="rgba(34,197,94,0.1)" stroke="#1ec86c" stroke-width="1.6"/>
<circle cx="752.98" cy="724.10" r="4" fill="rgba(34,197,94,0.1)" stroke="#1ec86c" stroke-width="1.6"/>
<circle cx="770.17" cy="719.95" r="4" fill="rgba(34,197,94,0.1)" stroke="#1ec86c" stroke-width="1.6"/>
<circle cx="787.35" cy="719.95" r="4" fill="rgba(34,197,94,0.1)" stroke="#1ec86c" stroke-width="1.6"/>
<circle cx="804.54" cy="707.48" r="4" fill="rgba(34,197,94,0.1)" stroke="#1ec86c" stroke-width="1.6"/>
<circle cx="821.72" cy="719.95" r="4" fill="rgba(34,197,94,0.1)" stroke="#1ec86c" stroke-width="1.6"/>
<circle cx="838.91" cy="715.79" r="4" fill="rgba(34,197,94,0.1)" stroke="#1ec86c" stroke-width="1.6"/>
<circle cx="856.09" cy="719.95" r="4" fill="rgba(34,197,94,0.1)" stroke="#1ec86c" stroke-width="1.6"/>
<circle cx="873.28" cy="724.10" r="4" fill="rgba(34,197,94,0.1)" stroke="#1ec86c" stroke-width="1.6"/>
<circle cx="890.46" cy="724.10" r="4" fill="rgba(34,197,94,0.1)" stroke="#1ec86c" stroke-width="1.6"/>
<circle cx="907.65" cy="719.95" r="4" fill="rgba(34,197,94,0.1)" stroke="#1ec86c" stroke-width="1.6"/>
<circle cx="924.84" cy="719.95" r="4" fill="rgba(34,197,94,0.1)" stroke="#1ec86c" stroke-width="1.6"/>
<circle cx="942.02" cy="724.10" r="4" fill="rgba(34,197,94,0.1)" stroke="#1ec86c" stroke-width="1.6"/>
<circle cx="959.21" cy="715.79" r="4" fill="rgba(34,197,94,0.1)" stroke="#1ec86c" stroke-width="1.6"/>
<circle cx="976.39" cy="724.10" r="4" fill="rgba(34,197,94,0.1)" stroke="#1ec86c" stroke-width="1.6"/>
<circle cx="993.58" cy="719.95" r="4" fill="rgba(34,197,94,0.1)" stroke="#1ec86c" stroke-width="1.6"/>
<circle cx="1010.76" cy="724.10" r="4" fill="rgba(34,197,94,0.1)" stroke="#1ec86c" stroke-width="1.6"/>
<circle cx="1027.95" cy="715.79" r="4" fill="rgba(34,197,94,0.1)" stroke="#1ec86c" stroke-width="1.6"/>
<circle cx="1045.13" cy="711.64" r="4" fill="rgba(34,197,94,0.1)" stroke="#1ec86c" stroke-width="1.6"/>
<circle cx="1062.32" cy="707.48" r="4" fill="rgba(34,197,94,0.1)" stroke="#1ec86c" stroke-width="1.6"/>
<circle cx="1079.51" cy="719.95" r="4" fill="rgba(34,197,94,0.1)" stroke="#1ec86c" stroke-width="1.6"/>
<circle cx="1096.69" cy="724.10" r="4" fill="rgba(34,197,94,0.1)" stroke="#1ec86c" stroke-width="1.6"/>
<circle cx="1113.88" cy="724.10" r="4" fill="rgba(34,197,94,0.1)" stroke="#1ec86c" stroke-width="1.6"/>
<circle cx="1131.06" cy="724.10" r="4" fill="rgba(34,197,94,0.1)" stroke="#1ec86c" stroke-width="1.6"/>
<circle cx="1148.25" cy="707.48" r="4" fill="rgba(34,197,94,0.1)" stroke="#1ec86c" stroke-width="1.6"/>
<circle cx="1165.43" cy="719.95" r="4" fill="rgba(34,197,94,0.1)" stroke="#1ec86c" stroke-width="1.6"/>
<circle cx="1182.62" cy="724.10" r="4" fill="rgba(34,197,94,0.1)" stroke="#1ec86c" stroke-width="1.6"/>
<circle cx="1199.80" cy="724.10" r="4" fill="rgba(34,197,94,0.1)" stroke="#1ec86c" stroke-width="1.6"/>
<circle cx="1216.99" cy="724.10" r="4" fill="rgba(34,197,94,0.1)" stroke="#1ec86c" stroke-width="1.6"/>
<circle cx="1234.18" cy="724.10" r="4" fill="rgba(34,197,94,0.1)" stroke="#1ec86c" stroke-width="1.6"/>
<circle cx="1251.36" cy="724.10" r="4" fill="rgba(34,197,94,0.1)" stroke="#1ec86c" stroke-width="1.6"/>
<circle cx="1268.55" cy="719.95" r="4" fill="rgba(34,197,94,0.1)" stroke="#1ec86c" stroke-width="1.6"/>
<circle cx="1285.73" cy="719.95" r="4" fill="rgba(34,197,94,0.1)" stroke="#1ec86c" stroke-width="1.6"/>
<circle cx="1302.92" cy="724.10" r="4" fill="rgba(34,197,94,0.1)" stroke="#1ec86c" stroke-width="1.6"/>
<circle cx="1320.10" cy="724.10" r="4" fill="rgba(34,197,94,0.1)" stroke="#1ec86c" stroke-width="1.6"/>
<circle cx="1337.29" cy="724.10" r="4" fill="rgba(34,197,94,0.1)" stroke="#1ec86c" stroke-width="1.6"/>
<circle cx="1354.47" cy="719.95" r="4" fill="rgba(34,197,94,0.1)" stroke="#1ec86c" stroke-width="1.6"/>
<circle cx="1371.66" cy="724.10" r="4" fill="rgba(34,197,94,0.1)" stroke="#1ec86c" stroke-width="1.6"/>
<circle cx="1388.85" cy="715.79" r="4" fill="rgba(34,197,94,0.1)" stroke="#1ec86c" stroke-width="1.6"/>
<circle cx="1406.03" cy="699.17" r="4" fill="rgba(34,197,94,0.1)" stroke="#1ec86c" stroke-width="1.6"/>
<circle cx="1423.22" cy="661.79" r="4" fill="rgba(34,197,94,0.1)" stroke="#1ec86c" stroke-width="1.6"/>
<circle cx="1440.40" cy="678.40" r="4" fill="rgba(34,197,94,0.1)" stroke="#1ec86c" stroke-width="1.6"/>
<circle cx="1457.59" cy="711.64" r="4" fill="rgba(34,197,94,0.1)" stroke="#1ec86c" stroke-width="1.6"/>
<circle cx="1474.77" cy="724.10" r="4" fill="rgba(34,197,94,0.1)" stroke="#1ec86c" stroke-width="1.6"/>
<circle cx="1491.96" cy="724.10" r="4" fill="rgba(34,197,94,0.1)" stroke="#1ec86c" stroke-width="1.6"/>
<circle cx="1509.14" cy="695.02" r="4" fill="rgba(34,197,94,0.1)" stroke="#1ec86c" stroke-width="1.6"/>
<circle cx="1526.33" cy="690.87" r="4" fill="rgba(34,197,94,0.1)" stroke="#1ec86c" stroke-width="1.6"/>
<circle cx="1543.52" cy="657.63" r="4" fill="rgba(34,197,94,0.1)" stroke="#1ec86c" stroke-width="1.6"/>
<circle cx="1560.70" cy="674.25" r="4" fill="rgba(34,197,94,0.1)" stroke="#1ec86c" stroke-width="1.6"/>
<circle cx="1577.89" cy="678.40" r="4" fill="rgba(34,197,94,0.1)" stroke="#1ec86c" stroke-width="1.6"/>
<circle cx="1595.07" cy="711.64" r="4" fill="rgba(34,197,94,0.1)" stroke="#1ec86c" stroke-width="1.6"/>
<circle cx="1612.26" cy="719.95" r="4" fill="rgba(34,197,94,0.1)" stroke="#1ec86c" stroke-width="1.6"/>
<circle cx="1629.44" cy="724.10" r="4" fill="rgba(34,197,94,0.1)" stroke="#1ec86c" stroke-width="1.6"/>
<circle cx="1646.63" cy="699.17" r="4" fill="rgba(34,197,94,0.1)" stroke="#1ec86c" stroke-width="1.6"/>
<circle cx="1663.81" cy="699.17" r="4" fill="rgba(34,197,94,0.1)" stroke="#1ec86c" stroke-width="1.6"/>
<circle cx="1681.00" cy="711.64" r="4" fill="rgba(34,197,94,0.1)" stroke="#1ec86c" stroke-width="1.6"/>
<path d="M134.30,719.95 C139.46,721.19 146.33,724.10 151.49,724.10 C156.64,724.10 163.99,722.21 168.67,719.95 C174.30,717.23 180.70,711.22 185.86,707.48 C191.01,703.74 199.06,693.10 203.04,695.02 C209.37,698.08 213.39,718.32 220.23,724.10 C223.70,724.10 232.33,724.10 237.41,724.10 C242.64,723.47 249.44,719.95 254.60,719.95 C259.75,719.95 266.56,723.47 271.78,724.10 C276.87,724.10 283.81,724.10 288.97,724.10 C294.13,724.10 301.07,724.10 306.16,724.10 C311.38,723.47 318.19,719.95 323.34,719.95 C328.50,719.95 335.30,723.47 340.53,724.10 C345.61,724.10 352.63,724.10 357.71,724.10 C362.94,723.47 369.74,719.95 374.90,719.95 C380.05,719.95 386.93,724.10 392.08,724.10 C397.24,724.10 404.11,719.95 409.27,719.95 C414.42,719.95 421.77,724.10 426.45,724.10 C432.08,722.74 438.21,712.29 443.64,711.64 C448.52,711.05 455.47,718.00 460.83,719.95 C465.78,721.74 473.93,724.10 478.01,724.10 C484.24,721.09 489.43,704.72 495.20,703.33 C499.74,702.23 506.95,712.51 512.38,715.79 C517.26,718.74 524.41,724.10 529.57,724.10 C534.72,724.10 541.33,717.10 546.75,715.79 C551.64,714.61 559.05,714.61 563.94,715.79 C569.37,717.10 576.24,724.10 581.12,724.10 C586.55,723.44 592.68,714.36 598.31,711.64 C603.00,709.37 610.54,706.88 615.50,707.48 C620.85,708.13 627.33,713.85 632.68,715.79 C637.64,717.59 645.48,721.54 649.87,719.95 C655.79,717.80 661.90,703.33 667.05,703.33 C672.21,703.33 678.31,716.36 684.24,719.95 C688.62,722.60 696.27,724.10 701.42,724.10 C706.58,724.10 713.38,720.58 718.61,719.95 C723.69,719.33 730.64,719.95 735.79,719.95 C740.95,719.95 747.90,720.56 752.98,719.95 C758.21,719.31 765.21,715.19 770.17,715.79 C775.52,716.44 783.36,724.10 787.35,724.10 C793.68,721.04 798.21,705.29 804.54,699.17 C808.52,695.32 818.24,695.08 821.72,690.87 C828.55,682.61 833.49,667.46 838.91,657.63 C843.80,648.76 850.66,629.21 856.09,628.55 C860.97,627.96 866.95,650.42 873.28,653.48 C877.27,655.40 888.22,650.05 890.46,645.17 C898.53,627.62 901.82,598.44 907.65,578.70 C912.13,563.54 921.39,523.44 924.84,528.85 C931.71,539.64 938.09,640.30 942.02,632.71 C948.41,620.36 954.61,456.82 959.21,462.38 C964.92,469.28 967.37,612.07 976.39,674.25 C977.68,683.11 988.97,700.29 993.58,699.17 C999.28,697.80 1009.29,676.96 1010.76,665.94 C1019.60,599.69 1018.44,501.35 1027.95,441.61 C1028.76,436.54 1044.46,444.41 1045.13,449.92 C1054.78,529.16 1052.93,654.87 1062.32,724.10 C1063.24,724.10 1074.04,703.99 1079.51,703.33 C1084.35,702.74 1090.69,717.05 1096.69,719.95 C1101.00,722.03 1108.79,719.33 1113.88,719.95 C1119.11,720.58 1125.91,724.10 1131.06,724.10 C1136.22,724.10 1143.02,720.58 1148.25,719.95 C1153.33,719.33 1160.28,719.95 1165.43,719.95 C1170.59,719.95 1177.54,719.33 1182.62,719.95 C1187.85,720.58 1194.85,724.10 1199.80,724.10 C1205.16,723.45 1211.83,715.79 1216.99,715.79 C1222.15,715.79 1228.82,723.45 1234.18,724.10 C1239.13,724.10 1246.21,721.19 1251.36,719.95 C1256.52,718.70 1263.59,715.19 1268.55,715.79 C1273.90,716.44 1281.46,724.10 1285.73,724.10 C1291.77,721.91 1297.15,704.72 1302.92,703.33 C1307.46,702.23 1314.67,712.51 1320.10,715.79 C1324.99,718.74 1332.41,724.10 1337.29,724.10 C1342.72,723.44 1349.05,712.29 1354.47,711.64 C1359.36,711.05 1366.23,718.63 1371.66,719.95 C1376.55,721.13 1383.69,719.95 1388.85,719.95 C1394.00,719.95 1400.95,720.56 1406.03,719.95 C1411.26,719.31 1417.99,716.42 1423.22,715.79 C1428.30,715.18 1435.25,715.79 1440.40,715.79 C1445.56,715.79 1452.70,714.61 1457.59,715.79 C1463.01,717.10 1469.62,724.10 1474.77,724.10 C1479.93,724.10 1486.80,715.79 1491.96,715.79 C1497.11,715.79 1503.99,724.10 1509.14,724.10 C1514.30,724.10 1521.45,718.74 1526.33,715.79 C1531.76,712.51 1538.09,703.98 1543.52,703.33 C1548.40,702.74 1555.55,709.14 1560.70,711.64 C1565.86,714.13 1572.46,718.63 1577.89,719.95 C1582.77,721.13 1589.99,719.33 1595.07,719.95 C1600.30,720.58 1607.30,724.10 1612.26,724.10 C1617.61,723.45 1624.56,718.74 1629.44,715.79 C1634.87,712.51 1642.90,708.29 1646.63,703.33 C1653.21,694.58 1658.90,669.50 1663.81,670.09 C1669.22,670.75 1675.84,696.27 1681.00,707.48" fill="none" stroke="#f8ab0c" stroke-width="3.6" stroke-dasharray="6.6 6.8"/>
<circle cx="134.30" cy="719.95" r="4" fill="rgba(245,158,11,0.1)" stroke="#f8ab0c" stroke-width="1.6"/>
<circle cx="151.49" cy="724.10" r="4" fill="rgba(245,158,11,0.1)" stroke="#f8ab0c" stroke-width="1.6"/>
<circle cx="168.67" cy="719.95" r="4" fill="rgba(245,158,11,0.1)" stroke="#f8ab0c" stroke-width="1.6"/>
<circle cx="185.86" cy="707.48" r="4" fill="rgba(245,158,11,0.1)" stroke="#f8ab0c" stroke-width="1.6"/>
<circle cx="203.04" cy="695.02" r="4" fill="rgba(245,158,11,0.1)" stroke="#f8ab0c" stroke-width="1.6"/>
<circle cx="220.23" cy="724.10" r="4" fill="rgba(245,158,11,0.1)" stroke="#f8ab0c" stroke-width="1.6"/>
<circle cx="237.41" cy="724.10" r="4" fill="rgba(245,158,11,0.1)" stroke="#f8ab0c" stroke-width="1.6"/>
<circle cx="254.60" cy="719.95" r="4" fill="rgba(245,158,11,0.1)" stroke="#f8ab0c" stroke-width="1.6"/>
<circle cx="271.78" cy="724.10" r="4" fill="rgba(245,158,11,0.1)" stroke="#f8ab0c" stroke-width="1.6"/>
<circle cx="288.97" cy="724.10" r="4" fill="rgba(245,158,11,0.1)" stroke="#f8ab0c" stroke-width="1.6"/>
<circle cx="306.16" cy="724.10" r="4" fill="rgba(245,158,11,0.1)" stroke="#f8ab0c" stroke-width="1.6"/>
<circle cx="323.34" cy="719.95" r="4" fill="rgba(245,158,11,0.1)" stroke="#f8ab0c" stroke-width="1.6"/>
<circle cx="340.53" cy="724.10" r="4" fill="rgba(245,158,11,0.1)" stroke="#f8ab0c" stroke-width="1.6"/>
<circle cx="357.71" cy="724.10" r="4" fill="rgba(245,158,11,0.1)" stroke="#f8ab0c" stroke-width="1.6"/>
<circle cx="374.90" cy="719.95" r="4" fill="rgba(245,158,11,0.1)" stroke="#f8ab0c" stroke-width="1.6"/>
<circle cx="392.08" cy="724.10" r="4" fill="rgba(245,158,11,0.1)" stroke="#f8ab0c" stroke-width="1.6"/>
<circle cx="409.27" cy="719.95" r="4" fill="rgba(245,158,11,0.1)" stroke="#f8ab0c" stroke-width="1.6"/>
<circle cx="426.45" cy="724.10" r="4" fill="rgba(245,158,11,0.1)" stroke="#f8ab0c" stroke-width="1.6"/>
<circle cx="443.64" cy="711.64" r="4" fill="rgba(245,158,11,0.1)" stroke="#f8ab0c" stroke-width="1.6"/>
<circle cx="460.83" cy="719.95" r="4" fill="rgba(245,158,11,0.1)" stroke="#f8ab0c" stroke-width="1.6"/>
<circle cx="478.01" cy="724.10" r="4" fill="rgba(245,158,11,0.1)" stroke="#f8ab0c" stroke-width="1.6"/>
<circle cx="495.20" cy="703.33" r="4" fill="rgba(245,158,11,0.1)" stroke="#f8ab0c" stroke-width="1.6"/>
<circle cx="512.38" cy="715.79" r="4" fill="rgba(245,158,11,0.1)" stroke="#f8ab0c" stroke-width="1.6"/>
<circle cx="529.57" cy="724.10" r="4" fill="rgba(245,158,11,0.1)" stroke="#f8ab0c" stroke-width="1.6"/>
<circle cx="546.75" cy="715.79" r="4" fill="rgba(245,158,11,0.1)" stroke="#f8ab0c" stroke-width="1.6"/>
<circle cx="563.94" cy="715.79" r="4" fill="rgba(245,158,11,0.1)" stroke="#f8ab0c" stroke-width="1.6"/>
<circle cx="581.12" cy="724.10" r="4" fill="rgba(245,158,11,0.1)" stroke="#f8ab0c" stroke-width="1.6"/>
<circle cx="598.31" cy="711.64" r="4" fill="rgba(245,158,11,0.1)" stroke="#f8ab0c" stroke-width="1.6"/>
<circle cx="615.50" cy="707.48" r="4" fill="rgba(245,158,11,0.1)" stroke="#f8ab0c" stroke-width="1.6"/>
<circle cx="632.68" cy="715.79" r="4" fill="rgba(245,158,11,0.1)" stroke="#f8ab0c" stroke-width="1.6"/>
<circle cx="649.87" cy="719.95" r="4" fill="rgba(245,158,11,0.1)" stroke="#f8ab0c" stroke-width="1.6"/>
<circle cx="667.05" cy="703.33" r="4" fill="rgba(245,158,11,0.1)" stroke="#f8ab0c" stroke-width="1.6"/>
<circle cx="684.24" cy="719.95" r="4" fill="rgba(245,158,11,0.1)" stroke="#f8ab0c" stroke-width="1.6"/>
<circle cx="701.42" cy="724.10" r="4" fill="rgba(245,158,11,0.1)" stroke="#f8ab0c" stroke-width="1.6"/>
<circle cx="718.61" cy="719.95" r="4" fill="rgba(245,158,11,0.1)" stroke="#f8ab0c" stroke-width="1.6"/>
<circle cx="735.79" cy="719.95" r="4" fill="rgba(245,158,11,0.1)" stroke="#f8ab0c" stroke-width="1.6"/>
<circle cx="752.98" cy="719.95" r="4" fill="rgba(245,158,11,0.1)" stroke="#f8ab0c" stroke-width="1.6"/>
<circle cx="770.17" cy="715.79" r="4" fill="rgba(245,158,11,0.1)" stroke="#f8ab0c" stroke-width="1.6"/>
<circle cx="787.35" cy="724.10" r="4" fill="rgba(245,158,11,0.1)" stroke="#f8ab0c" stroke-width="1.6"/>
<circle cx="804.54" cy="699.17" r="4" fill="rgba(245,158,11,0.1)" stroke="#f8ab0c" stroke-width="1.6"/>
<circle cx="821.72" cy="690.87" r="4" fill="rgba(245,158,11,0.1)" stroke="#f8ab0c" stroke-width="1.6"/>
<circle cx="838.91" cy="657.63" r="4" fill="rgba(245,158,11,0.1)" stroke="#f8ab0c" stroke-width="1.6"/>
<circle cx="856.09" cy="628.55" r="4" fill="rgba(245,158,11,0.1)" stroke="#f8ab0c" stroke-width="1.6"/>
<circle cx="873.28" cy="653.48" r="4" fill="rgba(245,158,11,0.1)" stroke="#f8ab0c" stroke-width="1.6"/>
<circle cx="890.46" cy="645.17" r="4" fill="rgba(245,158,11,0.1)" stroke="#f8ab0c" stroke-width="1.6"/>
<circle cx="907.65" cy="578.70" r="4" fill="rgba(245,158,11,0.1)" stroke="#f8ab0c" stroke-width="1.6"/>
<circle cx="924.84" cy="528.85" r="4" fill="rgba(245,158,11,0.1)" stroke="#f8ab0c" stroke-width="1.6"/>
<circle cx="942.02" cy="632.71" r="4" fill="rgba(245,158,11,0.1)" stroke="#f8ab0c" stroke-width="1.6"/>
<circle cx="959.21" cy="462.38" r="4" fill="rgba(245,158,11,0.1)" stroke="#f8ab0c" stroke-width="1.6"/>
<circle cx="976.39" cy="674.25" r="4" fill="rgba(245,158,11,0.1)" stroke="#f8ab0c" stroke-width="1.6"/>
<circle cx="993.58" cy="699.17" r="4" fill="rgba(245,158,11,0.1)" stroke="#f8ab0c" stroke-width="1.6"/>
<circle cx="1010.76" cy="665.94" r="4" fill="rgba(245,158,11,0.1)" stroke="#f8ab0c" stroke-width="1.6"/>
<circle cx="1027.95" cy="441.61" r="4" fill="rgba(245,158,11,0.1)" stroke="#f8ab0c" stroke-width="1.6"/>
<circle cx="1045.13" cy="449.92" r="4" fill="rgba(245,158,11,0.1)" stroke="#f8ab0c" stroke-width="1.6"/>
<circle cx="1062.32" cy="724.10" r="4" fill="rgba(245,158,11,0.1)" stroke="#f8ab0c" stroke-width="1.6"/>
<circle cx="1079.51" cy="703.33" r="4" fill="rgba(245,158,11,0.1)" stroke="#f8ab0c" stroke-width="1.6"/>
<circle cx="1096.69" cy="719.95" r="4" fill="rgba(245,158,11,0.1)" stroke="#f8ab0c" stroke-width="1.6"/>
<circle cx="1113.88" cy="719.95" r="4" fill="rgba(245,158,11,0.1)" stroke="#f8ab0c" stroke-width="1.6"/>
<circle cx="1131.06" cy="724.10" r="4" fill="rgba(245,158,11,0.1)" stroke="#f8ab0c" stroke-width="1.6"/>
<circle cx="1148.25" cy="719.95" r="4" fill="rgba(245,158,11,0.1)" stroke="#f8ab0c" stroke-width="1.6"/>
<circle cx="1165.43" cy="719.95" r="4" fill="rgba(245,158,11,0.1)" stroke="#f8ab0c" stroke-width="1.6"/>
<circle cx="1182.62" cy="719.95" r="4" fill="rgba(245,158,11,0.1)" stroke="#f8ab0c" stroke-width="1.6"/>
<circle cx="1199.80" cy="724.10" r="4" fill="rgba(245,158,11,0.1)" stroke="#f8ab0c" stroke-width="1.6"/>
<circle cx="1216.99" cy="715.79" r="4" fill="rgba(245,158,11,0.1)" stroke="#f8ab0c" stroke-width="1.6"/>
<circle cx="1234.18" cy="724.10" r="4" fill="rgba(245,158,11,0.1)" stroke="#f8ab0c" stroke-width="1.6"/>
<circle cx="1251.36" cy="719.95" r="4" fill="rgba(245,158,11,0.1)" stroke="#f8ab0c" stroke-width="1.6"/>
<circle cx="1268.55" cy="715.79" r="4" fill="rgba(245,158,11,0.1)" stroke="#f8ab0c" stroke-width="1.6"/>
<circle cx="1285.73" cy="724.10" r="4" fill="rgba(245,158,11,0.1)" stroke="#f8ab0c" stroke-width="1.6"/>
<circle cx="1302.92" cy="703.33" r="4" fill="rgba(245,158,11,0.1)" stroke="#f8ab0c" stroke-width="1.6"/>
<circle cx="1320.10" cy="715.79" r="4" fill="rgba(245,158,11,0.1)" stroke="#f8ab0c" stroke-width="1.6"/>
<circle cx="1337.29" cy="724.10" r="4" fill="rgba(245,158,11,0.1)" stroke="#f8ab0c" stroke-width="1.6"/>
<circle cx="1354.47" cy="711.64" r="4" fill="rgba(245,158,11,0.1)" stroke="#f8ab0c" stroke-width="1.6"/>
<circle cx="1371.66" cy="719.95" r="4" fill="rgba(245,158,11,0.1)" stroke="#f8ab0c" stroke-width="1.6"/>
<circle cx="1388.85" cy="719.95" r="4" fill="rgba(245,158,11,0.1)" stroke="#f8ab0c" stroke-width="1.6"/>
<circle cx="1406.03" cy="719.95" r="4" fill="rgba(245,158,11,0.1)" stroke="#f8ab0c" stroke-width="1.6"/>
<circle cx="1423.22" cy="715.79" r="4" fill="rgba(245,158,11,0.1)" stroke="#f8ab0c" stroke-width="1.6"/>
<circle cx="1440.40" cy="715.79" r="4" fill="rgba(245,158,11,0.1)" stroke="#f8ab0c" stroke-width="1.6"/>
<circle cx="1457.59" cy="715.79" r="4" fill="rgba(245,158,11,0.1)" stroke="#f8ab0c" stroke-width="1.6"/>
<circle cx="1474.77" cy="724.10" r="4" fill="rgba(245,158,11,0.1)" stroke="#f8ab0c" stroke-width="1.6"/>
<circle cx="1491.96" cy="715.79" r="4" fill="rgba(245,158,11,0.1)" stroke="#f8ab0c" stroke-width="1.6"/>
<circle cx="1509.14" cy="724.10" r="4" fill="rgba(245,158,11,0.1)" stroke="#f8ab0c" stroke-width="1.6"/>
<circle cx="1526.33" cy="715.79" r="4" fill="rgba(245,158,11,0.1)" stroke="#f8ab0c" stroke-width="1.6"/>
<circle cx="1543.52" cy="703.33" r="4" fill="rgba(245,158,11,0.1)" stroke="#f8ab0c" stroke-width="1.6"/>
<circle cx="1560.70" cy="711.64" r="4" fill="rgba(245,158,11,0.1)" stroke="#f8ab0c" stroke-width="1.6"/>
<circle cx="1577.89" cy="719.95" r="4" fill="rgba(245,158,11,0.1)" stroke="#f8ab0c" stroke-width="1.6"/>
<circle cx="1595.07" cy="719.95" r="4" fill="rgba(245,158,11,0.1)" stroke="#f8ab0c" stroke-width="1.6"/>
<circle cx="1612.26" cy="724.10" r="4" fill="rgba(245,158,11,0.1)" stroke="#f8ab0c" stroke-width="1.6"/>
<circle cx="1629.44" cy="715.79" r="4" fill="rgba(245,158,11,0.1)" stroke="#f8ab0c" stroke-width="1.6"/>
<circle cx="1646.63" cy="703.33" r="4" fill="rgba(245,158,11,0.1)" stroke="#f8ab0c" stroke-width="1.6"/>
<circle cx="1663.81" cy="670.09" r="4" fill="rgba(245,158,11,0.1)" stroke="#f8ab0c" stroke-width="1.6"/>
<circle cx="1681.00" cy="707.48" r="4" fill="rgba(245,158,11,0.1)" stroke="#f8ab0c" stroke-width="1.6"/>
<text transform="translate(137.30,750.00) rotate(-50)" text-anchor="end" font-size="16.2" fill="#6b6b6b">2025-10-24</text>
<text transform="translate(171.67,750.00) rotate(-50)" text-anchor="end" font-size="16.2" fill="#6b6b6b">2025-10-26</text>
<text transform="translate(206.04,750.00) rotate(-50)" text-anchor="end" font-size="16.2" fill="#6b6b6b">2025-10-28</text>
<text transform="translate(240.41,750.00) rotate(-50)" text-anchor="end" font-size="16.2" fill="#6b6b6b">2025-10-30</text>
<text transform="translate(274.78,750.00) rotate(-50)" text-anchor="end" font-size="16.2" fill="#6b6b6b">2025-11-01</text>
<text transform="translate(309.16,750.00) rotate(-50)" text-anchor="end" font-size="16.2" fill="#6b6b6b">2025-11-03</text>
<text transform="translate(343.53,750.00) rotate(-50)" text-anchor="end" font-size="16.2" fill="#6b6b6b">2025-11-05</text>
<text transform="translate(377.90,750.00) rotate(-50)" text-anchor="end" font-size="16.2" fill="#6b6b6b">2025-11-07</text>
<text transform="translate(412.27,750.00) rotate(-50)" text-anchor="end" font-size="16.2" fill="#6b6b6b">2025-11-09</text>
<text transform="translate(446.64,750.00) rotate(-50)" text-anchor="end" font-size="16.2" fill="#6b6b6b">2025-11-11</text>
<text transform="translate(481.01,750.00) rotate(-50)" text-anchor="end" font-size="16.2" fill="#6b6b6b">2025-11-13</text>
<text transform="translate(515.38,750.00) rotate(-50)" text-anchor="end" font-size="16.2" fill="#6b6b6b">2025-11-15</text>
<text transform="translate(549.75,750.00) rotate(-50)" text-anchor="end" font-size="16.2" fill="#6b6b6b">2025-11-17</text>
<text transform="translate(584.12,750.00) rotate(-50)" text-anchor="end" font-size="16.2" fill="#6b6b6b">2025-11-19</text>
<text transform="translate(618.50,750.00) rotate(-50)" text-anchor="end" font-size="16.2" fill="#6b6b6b">2025-11-21</text>
<text transform="translate(652.87,750.00) rotate(-50)" text-anchor="end" font-size="16.2" fill="#6b6b6b">2025-11-23</text>
<text transform="translate(687.24,750.00) rotate(-50)" text-anchor="end" font-size="16.2" fill="#6b6b6b">2025-11-25</text>
<text transform="translate(721.61,750.00) rotate(-50)" text-anchor="end" font-size="16.2" fill="#6b6b6b">2025-11-27</text>
<text transform="translate(755.98,750.00) rotate(-50)" text-anchor="end" font-size="16.2" fill="#6b6b6b">2025-11-29</text>
<text transform="translate(790.35,750.00) rotate(-50)" text-anchor="end" font-size="16.2" fill="#6b6b6b">2025-12-01</text>
<text transform="translate(824.72,750.00) rotate(-50)" text-anchor="end" font-size="16.2" fill="#6b6b6b">2025-12-03</text>
<text transform="translate(859.09,750.00) rotate(-50)" text-anchor="end" font-size="16.2" fill="#6b6b6b">2025-12-05</text>
<text transform="translate(893.46,750.00) rotate(-50)" text-anchor="end" font-size="16.2" fill="#6b6b6b">2025-12-07</text>
<text transform="translate(927.84,750.00) rotate(-50)" text-anchor="end" font-size="16.2" fill="#6b6b6b">2025-12-09</text>
<text transform="translate(962.21,750.00) rotate(-50)" text-anchor="end" font-size="16.2" fill="#6b6b6b">2025-12-11</text>
<text transform="translate(996.58,750.00) rotate(-50)" text-anchor="end" font-size="16.2" fill="#6b6b6b">2025-12-13</text>
<text transform="translate(1030.95,750.00) rotate(-50)" text-anchor="end" font-size="16.2" fill="#6b6b6b">2025-12-15</text>
<text transform="translate(1065.32,750.00) rotate(-50)" text-anchor="end" font-size="16.2" fill="#6b6b6b">2025-12-17</text>
<text transform="translate(1099.69,750.00) rotate(-50)" text-anchor="end" font-size="16.2" fill="#6b6b6b">2025-12-19</text>
<text transform="translate(1134.06,750.00) rotate(-50)" text-anchor="end" font-size="16.2" fill="#6b6b6b">2025-12-21</text>
<text transform="translate(1168.43,750.00) rotate(-50)" text-anchor="end" font-size="16.2" fill="#6b6b6b">2025-12-23</text>
<text transform="translate(1202.80,750.00) rotate(-50)" text-anchor="end" font-size="16.2" fill="#6b6b6b">2025-12-25</text>
<text transform="translate(1237.18,750.00) rotate(-50)" text-anchor="end" font-size="16.2" fill="#6b6b6b">2025-12-27</text>
<text transform="translate(1271.55,750.00) rotate(-50)" text-anchor="end" font-size="16.2" fill="#6b6b6b">2025-12-29</text>
<text transform="translate(1305.92,750.00) rotate(-50)" text-anchor="end" font-size="16.2" fill="#6b6b6b">2025-12-31</text>
<text transform="translate(1340.29,750.00) rotate(-50)" text-anchor="end" font-size="16.2" fill="#6b6b6b">2026-01-02</text>
<text transform="translate(1374.66,750.00) rotate(-50)" text-anchor="end" font-size="16.2" fill="#6b6b6b">2026-01-04</text>
<text transform="translate(1409.03,750.00) rotate(-50)" text-anchor="end" font-size="16.2" fill="#6b6b6b">2026-01-06</text>
<text transform="translate(1443.40,750.00) rotate(-50)" text-anchor="end" font-size="16.2" fill="#6b6b6b">2026-01-08</text>
<text transform="translate(1477.77,750.00) rotate(-50)" text-anchor="end" font-size="16.2" fill="#6b6b6b">2026-01-10</text>
<text transform="translate(1512.14,750.00) rotate(-50)" text-anchor="end" font-size="16.2" fill="#6b6b6b">2026-01-12</text>
<text transform="translate(1546.52,750.00) rotate(-50)" text-anchor="end" font-size="16.2" fill="#6b6b6b">2026-01-14</text>
<text transform="translate(1580.89,750.00) rotate(-50)" text-anchor="end" font-size="16.2" fill="#6b6b6b">2026-01-16</text>
<text transform="translate(1615.26,750.00) rotate(-50)" text-anchor="end" font-size="16.2" fill="#6b6b6b">2026-01-18</text>
<text transform="translate(1649.63,750.00) rotate(-50)" text-anchor="end" font-size="16.2" fill="#6b6b6b">2026-01-20</text>
<text transform="translate(1684.00,750.00) rotate(-50)" text-anchor="end" font-size="16.2" fill="#6b6b6b">2026-01-22</text>
<text transform="translate(79.5,578.6) rotate(-90)" text-anchor="middle" font-size="16.2" fill="#666">Visitors</text>
<text transform="translate(1726.8,578.6) rotate(90)" text-anchor="middle" font-size="16.2" fill="#666">Signups / Form Starts</text>
<path d="M2109.70,378.10 A198.7,198.7 0 1 1 1912.84,549.79 L2012.02,563.40 A98.6,98.6 0 1 0 2109.70,478.20 Z" fill="#4a96f8" stroke="#fff" stroke-width="3"/>
<path d="M1912.84,549.79 A198.7,198.7 0 0 1 1956.55,450.20 L2033.70,513.98 A98.6,98.6 0 0 0 2012.02,563.40 Z" fill="#1ec86c" stroke="#fff" stroke-width="3"/>
<path d="M1956.55,450.20 A198.7,198.7 0 0 1 2022.25,398.38 L2066.31,488.26 A98.6,98.6 0 0 0 2033.70,513.98 Z" fill="#f8ab0c" stroke="#fff" stroke-width="3"/>
<path d="M2022.25,398.38 A198.7,198.7 0 0 1 2085.34,379.60 L2097.61,478.94 A98.6,98.6 0 0 0 2066.31,488.26 Z" fill="#f55a55" stroke="#fff" stroke-width="3"/>
<path d="M2085.34,379.60 A198.7,198.7 0 0 1 2100.26,378.32 L2105.01,478.31 A98.6,98.6 0 0 0 2097.61,478.94 Z" fill="#a07af8" stroke="#fff" stroke-width="3"/>
<path d="M2100.26,378.32 A198.7,198.7 0 0 1 2109.70,378.10 L2109.70,478.20 A98.6,98.6 0 0 0 2105.01,478.31 Z" fill="#08bcd8" stroke="#fff" stroke-width="3"/>
<rect x="2412.3" y="501.00" width="13.6" height="11.4" fill="#4a96f8"/>
<text x="2434.03" y="510.90" font-size="14.4" fill="#666"  textLength="95.26" lengthAdjust="spacingAndGlyphs" >Direct ((direct))</text>
<rect x="2412.3" y="528.80" width="13.6" height="11.4" fill="#1ec86c"/>
<text x="2434.51" y="538.70" font-size="14.4" fill="#666"  textLength="190.40" lengthAdjust="spacingAndGlyphs" >Organic Social (linkedin.com)</text>
<rect x="2412.3" y="556.60" width="13.6" height="11.4" fill="#f8ab0c"/>
<text x="2434.52" y="566.50" font-size="14.4" fill="#666"  textLength="187.38" lengthAdjust="spacingAndGlyphs" >Organic Social (t.co (Twitter))</text>
<rect x="2412.3" y="584.40" width="13.6" height="11.4" fill="#f55a55"/>
<text x="2434.51" y="594.30" font-size="14.4" fill="#666"  textLength="157.99" lengthAdjust="spacingAndGlyphs" >Organic Search (google)</text>
<rect x="2412.3" y="612.20" width="13.6" height="11.4" fill="#a07af8"/>
<text x="2434.50" y="622.10" font-size="14.4" fill="#666"  textLength="178.11" lengthAdjust="spacingAndGlyphs" >Organic Social (reddit.com)</text>
<rect x="2412.3" y="640.00" width="13.6" height="11.4" fill="#08bcd8"/>
<text x="2434.00" y="649.90" font-size="14.4" fill="#666"  textLength="137.92" lengthAdjust="spacingAndGlyphs" >Referral (github.com)</text>
<line x1="60" y1="1070.2" x2="2632.5" y2="1070.2" stroke="#f0f0f2" stroke-width="1.6"/>
<line x1="60" y1="1155.40" x2="2632.5" y2="1155.40" stroke="#f0f0f2" stroke-width="1.6"/>
<path d="M82,1114.60 H94.2 M88.1,1108.50 V1120.70" stroke="#4a90f5" stroke-width="3"/>
<rect x="994.1" y="1097.40" width="224.0" height="31.2" rx="6" fill="url(#barg)"/>
<line x1="60" y1="1240.45" x2="2632.5" y2="1240.45" stroke="#f0f0f2" stroke-width="1.6"/>
<path d="M82,1199.65 H94.2 M88.1,1193.55 V1205.75" stroke="#4a90f5" stroke-width="3"/>
<rect x="994.1" y="1182.45" width="33.5" height="31.2" rx="6" fill="url(#barg)"/>
<line x1="60" y1="1325.50" x2="2632.5" y2="1325.50" stroke="#f0f0f2" stroke-width="1.6"/>
<path d="M82,1284.70 H94.2 M88.1,1278.60 V1290.80" stroke="#4a90f5" stroke-width="3"/>
<rect x="994.1" y="1267.50" width="25.5" height="31.2" rx="6" fill="url(#barg)"/>
<line x1="60" y1="1410.55" x2="2632.5" y2="1410.55" stroke="#f0f0f2" stroke-width="1.6"/>
<path d="M82,1369.75 H94.2 M88.1,1363.65 V1375.85" stroke="#4a90f5" stroke-width="3"/>
<rect x="994.1" y="1352.55" width="19.7" height="31.2" rx="6" fill="url(#barg)"/>
<line x1="60" y1="1495.60" x2="2632.5" y2="1495.60" stroke="#f0f0f2" stroke-width="1.6"/>
<path d="M82,1454.80 H94.2 M88.1,1448.70 V1460.90" stroke="#4a90f5" stroke-width="3"/>
<rect x="994.1" y="1437.60" width="5.6" height="31.2" rx="6" fill="url(#barg)"/>
<line x1="60" y1="1580.65" x2="2632.5" y2="1580.65" stroke="#f0f0f2" stroke-width="1.6"/>
<path d="M82,1539.85 H94.2 M88.1,1533.75 V1545.95" stroke="#4a90f5" stroke-width="3"/>
<rect x="994.1" y="1522.65" width="5.6" height="31.2" rx="6" fill="url(#barg)"/>
<text x="32.97" y="68.80" font-size="39" fill="#1f1f3d" font-weight="bold" textLength="507.87" lengthAdjust="spacingAndGlyphs" >Website Traffic &amp; Conversions</text>
<text x="2264.38" y="62.40" font-size="20.5" fill="#6b6b6b"  textLength="378.85" lengthAdjust="spacingAndGlyphs" >Last 90 Days (Oct 25, 2025 - Jan 23, 2026)</text>
<text transform="translate(59.24,0) scale(0.9,1)" x="0" y="153.00" font-size="18" fill="#6b6b6b"  textLength="163.01" lengthAdjust="spacing" stroke="#6b6b6b" stroke-width="0.45">TOTAL VISITORS</text>
<text transform="translate(723.24,0) scale(0.9,1)" x="0" y="153.00" font-size="18" fill="#6b6b6b"  textLength="171.01" lengthAdjust="spacing" stroke="#6b6b6b" stroke-width="0.45">TOTAL SESSIONS</text>
<text transform="translate(1384.97,0) scale(0.9,1)" x="0" y="153.00" font-size="18" fill="#6b6b6b"  textLength="155.75" lengthAdjust="spacing" stroke="#6b6b6b" stroke-width="0.45">FORM SIGNUPS</text>
<text transform="translate(2049.68,0) scale(0.9,1)" x="0" y="153.00" font-size="18" fill="#6b6b6b"  textLength="190.80" lengthAdjust="spacing" stroke="#6b6b6b" stroke-width="0.45">CONVERSION RATE</text>
<text x="59.06" y="209.00" font-size="45" fill="#1f1f3d" font-weight="bold" textLength="121.75" lengthAdjust="spacingAndGlyphs" >8,569</text>
<text x="721.35" y="209.00" font-size="45" fill="#1f1f3d" font-weight="bold" textLength="143.20" lengthAdjust="spacingAndGlyphs" >10,994</text>
<text x="1384.03" y="209.00" font-size="45" fill="#1f1f3d" font-weight="bold" textLength="78.72" lengthAdjust="spacingAndGlyphs" >188</text>
<text x="2049.40" y="209.00" font-size="45" fill="#1f1f3d" font-weight="bold" textLength="122.44" lengthAdjust="spacingAndGlyphs" >2.19%</text>
<text x="76.74" y="240.70" font-size="17" fill="#20ad5c"  textLength="142.45" lengthAdjust="spacingAndGlyphs" stroke="#20ad5c" stroke-width="0.35">9.9% vs prev 30d</text>
<path d="M65.7,240.8 V229.4 M61.2,233.9 L65.7,229.3 L70.2,233.9" fill="none" stroke="#20ad5c" stroke-width="1.6"/>
<text x="59.96" y="350.60" font-size="22" fill="#1f1f3d" font-weight="bold" textLength="325.75" lengthAdjust="spacingAndGlyphs" >Traffic &amp; Conversions Over Time</text>
<circle cx="67.0" cy="388" r="7.8" fill="#4a96f8"/>
<text x="83.82" y="394.00" font-size="17.4" fill="#333"  textLength="59.13" lengthAdjust="spacingAndGlyphs" >Visitors</text>
<circle cx="183.0" cy="388" r="7.8" fill="#1ec86c"/>
<text x="198.98" y="394.00" font-size="17.4" fill="#333"  textLength="65.38" lengthAdjust="spacingAndGlyphs" >Signups</text>
<circle cx="303.9" cy="388" r="7.8" fill="#f8ab0c"/>
<text x="319.30" y="394.00" font-size="17.4" fill="#333"  textLength="95.66" lengthAdjust="spacingAndGlyphs" >Form Starts</text>
<text x="1822.36" y="351.40" font-size="22" fill="#1f1f3d" font-weight="bold" textLength="152.80" lengthAdjust="spacingAndGlyphs" >Traffic Sources</text>
<text x="58.74" y="926.10" font-size="22.4" fill="#1f1f3d" font-weight="bold" textLength="352.96" lengthAdjust="spacingAndGlyphs" >Conversion Sources with Drilldown</text>
<text x="80.15" y="982.50" font-size="21" fill="#ffffff"  textLength="134.07" lengthAdjust="spacingAndGlyphs" stroke="#ffffff" stroke-width="0.45">Traffic Sources</text>
<text x="266.51" y="982.50" font-size="21" fill="#1f1f3d"  textLength="176.30" lengthAdjust="spacingAndGlyphs" stroke="#1f1f3d" stroke-width="0.45">Conversion Sources</text>
<text transform="translate(250.31,0) scale(0.84,1)" x="0" y="1050.40" font-size="18" fill="#737373"  textLength="190.70" lengthAdjust="spacing" stroke="#737373" stroke-width="0.6">SOURCE / CHANNEL</text>
<text transform="translate(995.23,0) scale(0.84,1)" x="0" y="1050.40" font-size="18" fill="#737373"  textLength="88.76" lengthAdjust="spacing" stroke="#737373" stroke-width="0.6">VISITORS</text>
<text transform="translate(1316.41,0) scale(0.84,1)" x="0" y="1050.40" font-size="18" fill="#737373"  textLength="97.36" lengthAdjust="spacing" stroke="#737373" stroke-width="0.6">SESSIONS</text>
<text transform="translate(1657.06,0) scale(0.84,1)" x="0" y="1050.40" font-size="18" fill="#737373"  textLength="136.95" lengthAdjust="spacing" stroke="#737373" stroke-width="0.6">FORM STARTS</text>
<text transform="translate(2096.73,0) scale(0.84,1)" x="0" y="1050.40" font-size="18" fill="#737373"  textLength="183.47" lengthAdjust="spacing" stroke="#737373" stroke-width="0.6">CONVERSION RATE</text>
<text x="249.91" y="1107.90" font-size="21.8" fill="#1f1f3d" font-weight="bold" textLength="63.27" lengthAdjust="spacingAndGlyphs" >Direct</text>
<text x="250.22" y="1133.60" font-size="18" fill="#707070"  textLength="130.47" lengthAdjust="spacingAndGlyphs" >(direct) / (none)</text>
<text x="1229.00" y="1120.90" font-size="22" fill="#222"  textLength="56.35" lengthAdjust="spacingAndGlyphs" >5,405</text>
<text x="1316.33" y="1120.90" font-size="22" fill="#222"  textLength="50.36" lengthAdjust="spacingAndGlyphs" >8,113</text>
<text x="1657.06" y="1120.90" font-size="22" fill="#222"  textLength="39.37" lengthAdjust="spacingAndGlyphs" >500</text>
<text x="2096.16" y="1120.90" font-size="22" fill="#222"  textLength="63.14" lengthAdjust="spacingAndGlyphs" >9.25%</text>
<text x="250.52" y="1192.95" font-size="21.8" fill="#1f1f3d" font-weight="bold" textLength="150.10" lengthAdjust="spacingAndGlyphs" >Organic Social</text>
<text x="250.14" y="1218.65" font-size="18" fill="#707070"  textLength="179.32" lengthAdjust="spacingAndGlyphs" >linkedin.com / referral</text>
<text x="1038.28" y="1205.95" font-size="22" fill="#222"  >618</text>
<text x="1316.11" y="1205.95" font-size="22" fill="#222"  textLength="35.32" lengthAdjust="spacingAndGlyphs" >716</text>
<text x="1656.32" y="1205.95" font-size="22" fill="#222"  textLength="24.60" lengthAdjust="spacingAndGlyphs" >12</text>
<text x="2095.56" y="1205.95" font-size="22" fill="#222"  textLength="61.01" lengthAdjust="spacingAndGlyphs" >1.94%</text>
<text x="250.52" y="1278.00" font-size="21.8" fill="#1f1f3d" font-weight="bold" textLength="150.00" lengthAdjust="spacingAndGlyphs" >Organic Social</text>
<text x="251.11" y="1303.70" font-size="18" fill="#707070"  textLength="181.56" lengthAdjust="spacingAndGlyphs" >t.co (Twitter) / referral</text>
<text x="1030.88" y="1291.00" font-size="22" fill="#222"  textLength="37.61" lengthAdjust="spacingAndGlyphs" >473</text>
<text x="1316.08" y="1291.00" font-size="22" fill="#222"  textLength="36.88" lengthAdjust="spacingAndGlyphs" >618</text>
<text x="1656.34" y="1291.00" font-size="22" fill="#222"  textLength="24.21" lengthAdjust="spacingAndGlyphs" >13</text>
<text x="2096.11" y="1291.00" font-size="22" fill="#222"  textLength="61.67" lengthAdjust="spacingAndGlyphs" >2.75%</text>
<text x="250.51" y="1363.05" font-size="21.8" fill="#1f1f3d" font-weight="bold" textLength="159.62" lengthAdjust="spacingAndGlyphs" >Organic Search</text>
<text x="250.62" y="1388.75" font-size="18" fill="#707070"  textLength="132.88" lengthAdjust="spacingAndGlyphs" >google / organic</text>
<text x="1024.81" y="1376.05" font-size="22" fill="#222"  textLength="34.50" lengthAdjust="spacingAndGlyphs" >371</text>
<text x="1316.08" y="1376.05" font-size="22" fill="#222"  textLength="36.88" lengthAdjust="spacingAndGlyphs" >618</text>
<text x="1657.44" y="1376.05" font-size="22" fill="#222"  textLength="13.46" lengthAdjust="spacingAndGlyphs" >4</text>
<text x="2095.56" y="1376.05" font-size="22" fill="#222"  textLength="61.01" lengthAdjust="spacingAndGlyphs" >1.08%</text>
<text x="250.52" y="1448.10" font-size="21.8" fill="#1f1f3d" font-weight="bold" textLength="149.89" lengthAdjust="spacingAndGlyphs" >Organic Social</text>
<text x="250.14" y="1473.80" font-size="18" fill="#707070"  textLength="165.14" lengthAdjust="spacingAndGlyphs" >reddit.com / referral</text>
<text x="1010.48" y="1461.10" font-size="22" fill="#222"  textLength="26.00" lengthAdjust="spacingAndGlyphs" >84</text>
<text x="1316.10" y="1461.10" font-size="22" fill="#222"  textLength="26.19" lengthAdjust="spacingAndGlyphs" >97</text>
<text x="1657.05" y="1461.10" font-size="22" fill="#222"  textLength="13.50" lengthAdjust="spacingAndGlyphs" >0</text>
<text x="2096.33" y="1461.10" font-size="22" fill="#222"  textLength="62.96" lengthAdjust="spacingAndGlyphs" >0.00%</text>
<text x="249.92" y="1533.15" font-size="21.8" fill="#1f1f3d" font-weight="bold" textLength="83.85" lengthAdjust="spacingAndGlyphs" >Referral</text>
<text x="250.61" y="1558.85" font-size="18" fill="#707070"  textLength="167.75" lengthAdjust="spacingAndGlyphs" >github.com / referral</text>
<text x="1010.58" y="1546.15" font-size="22" fill="#222"  textLength="25.53" lengthAdjust="spacingAndGlyphs" >53</text>
<text x="1316.15" y="1546.15" font-size="22" fill="#222"  textLength="26.97" lengthAdjust="spacingAndGlyphs" >85</text>
<text x="1656.72" y="1546.15" font-size="22" fill="#222"  textLength="14.16" lengthAdjust="spacingAndGlyphs" >2</text>
<text x="2096.38" y="1546.15" font-size="22" fill="#222"  textLength="61.40" lengthAdjust="spacingAndGlyphs" >3.77%</text>
</svg>
</body></html>
